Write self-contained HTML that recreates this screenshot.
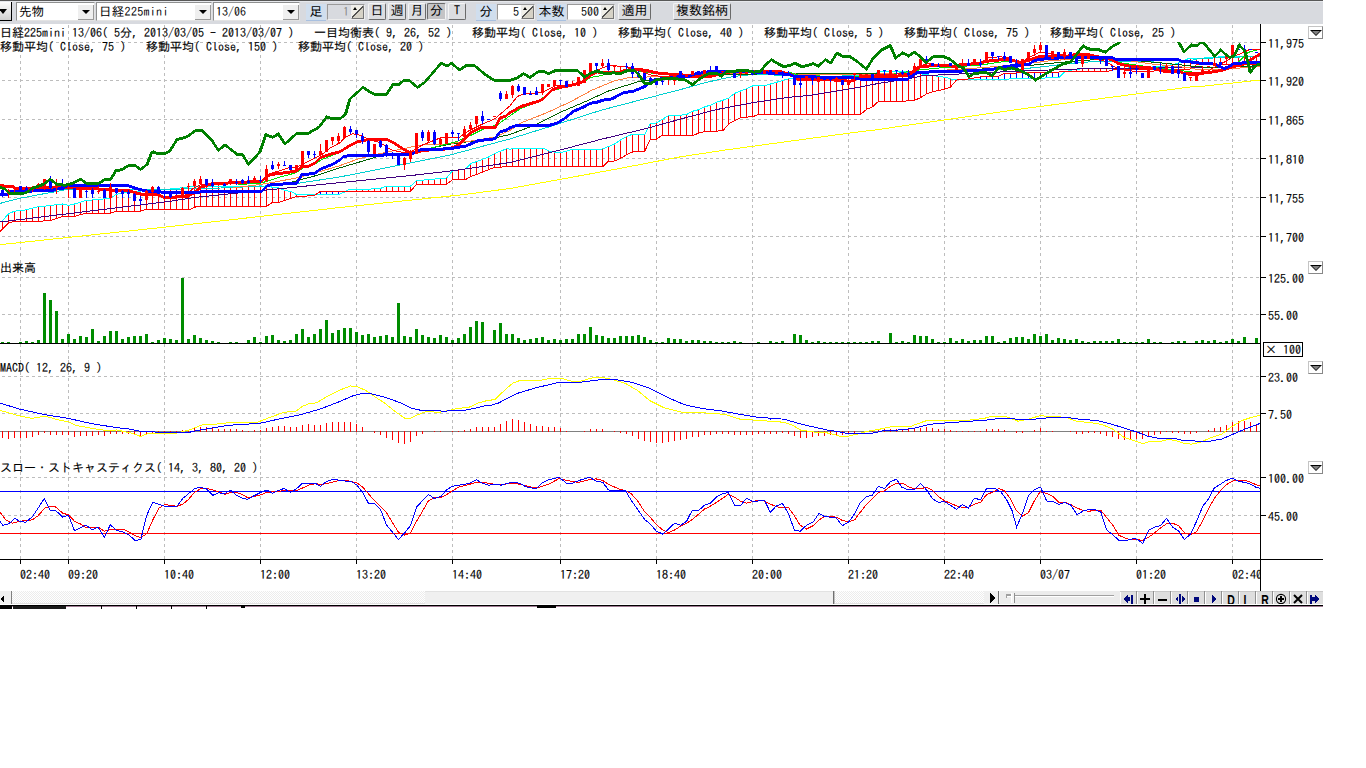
<!DOCTYPE html>
<html lang="ja">
<head>
<meta charset="utf-8">
<title>日経225mini 13/06 チャート</title>
<style>
html,body{margin:0;padding:0;background:#fff;}
body{width:1366px;height:768px;overflow:hidden;position:relative;
  font-family:"IPAGothic","Liberation Mono","Noto Sans CJK JP",monospace;font-size:12px;line-height:12px;color:#000;}
#tb{position:absolute;left:0;top:0;width:1323px;height:24px;background:#d8dadf;border-top:1px solid #585858;box-sizing:border-box;overflow:hidden;}
#tb:before{content:"";position:absolute;left:0;top:0;width:100%;height:1px;background:#e6e8ec;}
.cb{position:absolute;top:1px;height:19px;background:#fff;border:1px solid #8e8f8f;border-right-color:#e3e3e3;border-bottom-color:#e3e3e3;box-sizing:border-box;white-space:nowrap;}
.cb span{position:absolute;left:2px;top:2px;font-size:12px;line-height:12px;}
.cb span u{text-decoration:none;font-size:12.5px;}
.cb i{position:absolute;right:0px;top:2px;width:16px;height:15px;background:#efefef;border-right:1px solid #9a9a9a;border-bottom:1px solid #9a9a9a;box-sizing:border-box;}
.cb i:after{content:"";position:absolute;left:4px;top:5px;border:4px solid transparent;border-top:4px solid #000;border-bottom:0;}
.lb{position:absolute;top:3px;height:17px;background:#d0deee;border-bottom:1px solid #a8c0e0;box-sizing:border-box;text-align:center;font-size:13px;line-height:15px;}
.sp{position:absolute;top:3px;height:16px;background:#fff;border:1px solid #9a9a9a;border-right-color:#eee;border-bottom-color:#eee;box-sizing:border-box;text-align:right;font-size:12px;line-height:12px;}
.sp b{font-weight:normal;position:absolute;right:15px;top:0;}
.sp i{position:absolute;right:0;top:0;width:13px;height:14px;background:linear-gradient(135deg,#f0efe8 47%,#333 48%,#333 52%,#d6d2c6 53%);border:1px solid #777;border-top-color:#eee;border-left-color:#eee;box-sizing:border-box;}
.sp i:after{content:"";position:absolute;left:1px;top:1px;border-left:2px solid transparent;border-right:2px solid transparent;border-bottom:3px solid #000;}
.bt{position:absolute;top:2px;height:17px;background:#dcdde0;border:1px solid #f4f4f4;border-right-color:#6a6a6a;border-bottom-color:#6a6a6a;box-sizing:border-box;text-align:center;font-size:13px;line-height:14px;border-radius:2px;}
.bt.on{background:#c4c4c6;border-color:#6a6a6a #f4f4f4 #f4f4f4 #6a6a6a;}
.h{position:absolute;white-space:pre;height:12px;-webkit-text-stroke:0.12px #000;}
.dd{position:absolute;left:1308px;width:15px;height:13px;border:1px solid #888;border-top-color:#c4c4c4;border-left-color:#c4c4c4;box-sizing:border-box;background:#fff;}
.dd:before{content:"";position:absolute;left:1px;top:3px;border-left:6px solid transparent;border-right:6px solid transparent;border-top:6px solid #000;}
.dd:after{content:"";position:absolute;left:3px;top:4px;border-left:4px solid transparent;border-right:4px solid transparent;border-top:4px solid #808080;}
svg{position:absolute;left:0;top:0;}
svg .t text{font-family:"IPAGothic","Liberation Mono","Noto Sans CJK JP",monospace;font-size:12px;fill:#000;stroke:#000;stroke-width:0.12px;}
</style>
</head>
<body>
<svg width="1366" height="768" viewBox="0 0 1366 768" shape-rendering="crispEdges">
<g stroke="#bdbdbd" stroke-width="1" stroke-dasharray="3 3" fill="none"><line x1="20.5" y1="25" x2="20.5" y2="259"/><line x1="20.5" y1="260" x2="20.5" y2="359"/><line x1="20.5" y1="360" x2="20.5" y2="459"/><line x1="20.5" y1="460" x2="20.5" y2="559"/><line x1="68.5" y1="25" x2="68.5" y2="259"/><line x1="68.5" y1="260" x2="68.5" y2="359"/><line x1="68.5" y1="360" x2="68.5" y2="459"/><line x1="68.5" y1="460" x2="68.5" y2="559"/><line x1="164.5" y1="25" x2="164.5" y2="259"/><line x1="164.5" y1="260" x2="164.5" y2="359"/><line x1="164.5" y1="360" x2="164.5" y2="459"/><line x1="164.5" y1="460" x2="164.5" y2="559"/><line x1="260.5" y1="25" x2="260.5" y2="259"/><line x1="260.5" y1="260" x2="260.5" y2="359"/><line x1="260.5" y1="360" x2="260.5" y2="459"/><line x1="260.5" y1="460" x2="260.5" y2="559"/><line x1="356.5" y1="25" x2="356.5" y2="259"/><line x1="356.5" y1="260" x2="356.5" y2="359"/><line x1="356.5" y1="360" x2="356.5" y2="459"/><line x1="356.5" y1="460" x2="356.5" y2="559"/><line x1="452.5" y1="25" x2="452.5" y2="259"/><line x1="452.5" y1="260" x2="452.5" y2="359"/><line x1="452.5" y1="360" x2="452.5" y2="459"/><line x1="452.5" y1="460" x2="452.5" y2="559"/><line x1="560.5" y1="25" x2="560.5" y2="259"/><line x1="560.5" y1="260" x2="560.5" y2="359"/><line x1="560.5" y1="360" x2="560.5" y2="459"/><line x1="560.5" y1="460" x2="560.5" y2="559"/><line x1="656.5" y1="25" x2="656.5" y2="259"/><line x1="656.5" y1="260" x2="656.5" y2="359"/><line x1="656.5" y1="360" x2="656.5" y2="459"/><line x1="656.5" y1="460" x2="656.5" y2="559"/><line x1="752.5" y1="25" x2="752.5" y2="259"/><line x1="752.5" y1="260" x2="752.5" y2="359"/><line x1="752.5" y1="360" x2="752.5" y2="459"/><line x1="752.5" y1="460" x2="752.5" y2="559"/><line x1="848.5" y1="25" x2="848.5" y2="259"/><line x1="848.5" y1="260" x2="848.5" y2="359"/><line x1="848.5" y1="360" x2="848.5" y2="459"/><line x1="848.5" y1="460" x2="848.5" y2="559"/><line x1="944.5" y1="25" x2="944.5" y2="259"/><line x1="944.5" y1="260" x2="944.5" y2="359"/><line x1="944.5" y1="360" x2="944.5" y2="459"/><line x1="944.5" y1="460" x2="944.5" y2="559"/><line x1="1040.5" y1="25" x2="1040.5" y2="259"/><line x1="1040.5" y1="260" x2="1040.5" y2="359"/><line x1="1040.5" y1="360" x2="1040.5" y2="459"/><line x1="1040.5" y1="460" x2="1040.5" y2="559"/><line x1="1136.5" y1="25" x2="1136.5" y2="259"/><line x1="1136.5" y1="260" x2="1136.5" y2="359"/><line x1="1136.5" y1="360" x2="1136.5" y2="459"/><line x1="1136.5" y1="460" x2="1136.5" y2="559"/><line x1="1232.5" y1="25" x2="1232.5" y2="259"/><line x1="1232.5" y1="260" x2="1232.5" y2="359"/><line x1="1232.5" y1="360" x2="1232.5" y2="459"/><line x1="1232.5" y1="460" x2="1232.5" y2="559"/></g>
<g stroke="#bdbdbd" stroke-width="1" stroke-dasharray="3 3" stroke-dashoffset="4" fill="none"><line x1="0" y1="42.5" x2="1260" y2="42.5"/><line x1="0" y1="80.5" x2="1260" y2="80.5"/><line x1="0" y1="119.5" x2="1260" y2="119.5"/><line x1="0" y1="158.5" x2="1260" y2="158.5"/><line x1="0" y1="197.5" x2="1260" y2="197.5"/><line x1="0" y1="236.5" x2="1260" y2="236.5"/><line x1="0" y1="277.5" x2="1260" y2="277.5"/><line x1="0" y1="314.5" x2="1260" y2="314.5"/><line x1="0" y1="376.5" x2="1260" y2="376.5"/><line x1="0" y1="413.5" x2="1260" y2="413.5"/><line x1="0" y1="477.5" x2="1260" y2="477.5"/><line x1="0" y1="515.5" x2="1260" y2="515.5"/></g>
<defs><clipPath id="cg"><rect x="0" y="42" width="1260" height="220"/></clipPath></defs>
<g stroke-width="1"><line x1="2.5" y1="221.0" x2="2.5" y2="229.7" stroke="#ff0000"/><line x1="8.5" y1="214.3" x2="8.5" y2="223.4" stroke="#ff0000"/><line x1="14.5" y1="211.3" x2="14.5" y2="221.4" stroke="#ff0000"/><line x1="20.5" y1="210.6" x2="20.5" y2="221.4" stroke="#ff0000"/><line x1="26.5" y1="209.9" x2="26.5" y2="221.4" stroke="#ff0000"/><line x1="32.5" y1="208.4" x2="32.5" y2="221.4" stroke="#ff0000"/><line x1="38.5" y1="206.8" x2="38.5" y2="221.4" stroke="#ff0000"/><line x1="44.5" y1="206.3" x2="44.5" y2="220.9" stroke="#ff0000"/><line x1="50.5" y1="205.6" x2="50.5" y2="220.4" stroke="#ff0000"/><line x1="56.5" y1="204.9" x2="56.5" y2="218.6" stroke="#ff0000"/><line x1="62.5" y1="204.1" x2="62.5" y2="216.6" stroke="#ff0000"/><line x1="68.5" y1="205.2" x2="68.5" y2="216.4" stroke="#ff0000"/><line x1="74.5" y1="204.2" x2="74.5" y2="216.4" stroke="#ff0000"/><line x1="80.5" y1="202.3" x2="80.5" y2="214.6" stroke="#ff0000"/><line x1="86.5" y1="200.3" x2="86.5" y2="213.3" stroke="#ff0000"/><line x1="92.5" y1="200.0" x2="92.5" y2="213.2" stroke="#ff0000"/><line x1="98.5" y1="199.9" x2="98.5" y2="213.2" stroke="#ff0000"/><line x1="104.5" y1="198.9" x2="104.5" y2="213.2" stroke="#ff0000"/><line x1="110.5" y1="198.0" x2="110.5" y2="213.2" stroke="#ff0000"/><line x1="116.5" y1="194.6" x2="116.5" y2="211.4" stroke="#ff0000"/><line x1="122.5" y1="193.1" x2="122.5" y2="211.2" stroke="#ff0000"/><line x1="128.5" y1="192.4" x2="128.5" y2="211.2" stroke="#ff0000"/><line x1="134.5" y1="191.7" x2="134.5" y2="211.2" stroke="#ff0000"/><line x1="140.5" y1="191.1" x2="140.5" y2="211.2" stroke="#ff0000"/><line x1="146.5" y1="190.4" x2="146.5" y2="209.4" stroke="#ff0000"/><line x1="152.5" y1="190.1" x2="152.5" y2="209.2" stroke="#ff0000"/><line x1="158.5" y1="189.7" x2="158.5" y2="209.2" stroke="#ff0000"/><line x1="164.5" y1="189.4" x2="164.5" y2="209.2" stroke="#ff0000"/><line x1="170.5" y1="189.0" x2="170.5" y2="209.2" stroke="#ff0000"/><line x1="176.5" y1="188.4" x2="176.5" y2="209.2" stroke="#ff0000"/><line x1="182.5" y1="187.8" x2="182.5" y2="209.2" stroke="#ff0000"/><line x1="188.5" y1="187.1" x2="188.5" y2="209.2" stroke="#ff0000"/><line x1="194.5" y1="186.5" x2="194.5" y2="207.6" stroke="#ff0000"/><line x1="200.5" y1="186.3" x2="200.5" y2="206.3" stroke="#ff0000"/><line x1="206.5" y1="186.3" x2="206.5" y2="206.3" stroke="#ff0000"/><line x1="212.5" y1="186.3" x2="212.5" y2="206.3" stroke="#ff0000"/><line x1="218.5" y1="186.2" x2="218.5" y2="206.3" stroke="#ff0000"/><line x1="224.5" y1="186.2" x2="224.5" y2="206.3" stroke="#ff0000"/><line x1="230.5" y1="186.2" x2="230.5" y2="206.3" stroke="#ff0000"/><line x1="236.5" y1="186.1" x2="236.5" y2="206.3" stroke="#ff0000"/><line x1="242.5" y1="186.1" x2="242.5" y2="206.3" stroke="#ff0000"/><line x1="248.5" y1="186.1" x2="248.5" y2="206.3" stroke="#ff0000"/><line x1="254.5" y1="186.1" x2="254.5" y2="206.3" stroke="#ff0000"/><line x1="260.5" y1="186.0" x2="260.5" y2="206.3" stroke="#ff0000"/><line x1="266.5" y1="186.5" x2="266.5" y2="206.3" stroke="#ff0000"/><line x1="272.5" y1="187.1" x2="272.5" y2="202.7" stroke="#ff0000"/><line x1="278.5" y1="187.7" x2="278.5" y2="202.4" stroke="#ff0000"/><line x1="284.5" y1="190.1" x2="284.5" y2="200.6" stroke="#ff0000"/><line x1="290.5" y1="191.3" x2="290.5" y2="198.7" stroke="#ff0000"/><line x1="296.5" y1="194.3" x2="296.5" y2="196.8" stroke="#ff0000"/><line x1="320.5" y1="194.4" x2="320.5" y2="191.9" stroke="#0000ff"/><line x1="326.5" y1="194.3" x2="326.5" y2="191.9" stroke="#0000ff"/><line x1="332.5" y1="194.2" x2="332.5" y2="191.9" stroke="#0000ff"/><line x1="338.5" y1="194.2" x2="338.5" y2="191.9" stroke="#0000ff"/><line x1="356.5" y1="189.2" x2="356.5" y2="191.4" stroke="#ff0000"/><line x1="362.5" y1="189.2" x2="362.5" y2="191.4" stroke="#ff0000"/><line x1="368.5" y1="189.2" x2="368.5" y2="191.4" stroke="#ff0000"/><line x1="374.5" y1="188.3" x2="374.5" y2="191.4" stroke="#ff0000"/><line x1="380.5" y1="188.3" x2="380.5" y2="191.4" stroke="#ff0000"/><line x1="386.5" y1="186.7" x2="386.5" y2="191.4" stroke="#ff0000"/><line x1="392.5" y1="186.2" x2="392.5" y2="191.4" stroke="#ff0000"/><line x1="398.5" y1="186.2" x2="398.5" y2="191.4" stroke="#ff0000"/><line x1="404.5" y1="186.2" x2="404.5" y2="191.4" stroke="#ff0000"/><line x1="410.5" y1="186.2" x2="410.5" y2="191.4" stroke="#ff0000"/><line x1="416.5" y1="181.2" x2="416.5" y2="185.0" stroke="#ff0000"/><line x1="422.5" y1="180.2" x2="422.5" y2="184.4" stroke="#ff0000"/><line x1="428.5" y1="179.7" x2="428.5" y2="184.4" stroke="#ff0000"/><line x1="434.5" y1="179.1" x2="434.5" y2="184.4" stroke="#ff0000"/><line x1="440.5" y1="178.6" x2="440.5" y2="184.4" stroke="#ff0000"/><line x1="446.5" y1="178.0" x2="446.5" y2="184.4" stroke="#ff0000"/><line x1="452.5" y1="171.4" x2="452.5" y2="180.0" stroke="#ff0000"/><line x1="458.5" y1="170.0" x2="458.5" y2="179.5" stroke="#ff0000"/><line x1="464.5" y1="169.1" x2="464.5" y2="179.5" stroke="#ff0000"/><line x1="470.5" y1="164.6" x2="470.5" y2="176.9" stroke="#ff0000"/><line x1="476.5" y1="161.8" x2="476.5" y2="174.6" stroke="#ff0000"/><line x1="482.5" y1="159.5" x2="482.5" y2="172.3" stroke="#ff0000"/><line x1="488.5" y1="157.2" x2="488.5" y2="170.0" stroke="#ff0000"/><line x1="494.5" y1="153.9" x2="494.5" y2="167.4" stroke="#ff0000"/><line x1="500.5" y1="151.3" x2="500.5" y2="167.0" stroke="#ff0000"/><line x1="506.5" y1="149.1" x2="506.5" y2="166.9" stroke="#ff0000"/><line x1="512.5" y1="148.9" x2="512.5" y2="166.9" stroke="#ff0000"/><line x1="518.5" y1="148.4" x2="518.5" y2="166.8" stroke="#ff0000"/><line x1="524.5" y1="148.4" x2="524.5" y2="166.8" stroke="#ff0000"/><line x1="530.5" y1="148.4" x2="530.5" y2="166.8" stroke="#ff0000"/><line x1="536.5" y1="148.4" x2="536.5" y2="166.8" stroke="#ff0000"/><line x1="542.5" y1="148.4" x2="542.5" y2="166.8" stroke="#ff0000"/><line x1="548.5" y1="150.6" x2="548.5" y2="166.8" stroke="#ff0000"/><line x1="554.5" y1="152.0" x2="554.5" y2="166.8" stroke="#ff0000"/><line x1="560.5" y1="153.0" x2="560.5" y2="166.8" stroke="#ff0000"/><line x1="566.5" y1="151.2" x2="566.5" y2="166.7" stroke="#ff0000"/><line x1="572.5" y1="149.4" x2="572.5" y2="166.7" stroke="#ff0000"/><line x1="578.5" y1="149.4" x2="578.5" y2="166.7" stroke="#ff0000"/><line x1="584.5" y1="149.4" x2="584.5" y2="166.7" stroke="#ff0000"/><line x1="590.5" y1="149.4" x2="590.5" y2="166.7" stroke="#ff0000"/><line x1="596.5" y1="149.4" x2="596.5" y2="166.7" stroke="#ff0000"/><line x1="602.5" y1="149.0" x2="602.5" y2="166.7" stroke="#ff0000"/><line x1="608.5" y1="146.8" x2="608.5" y2="161.6" stroke="#ff0000"/><line x1="614.5" y1="144.3" x2="614.5" y2="161.1" stroke="#ff0000"/><line x1="620.5" y1="140.4" x2="620.5" y2="158.6" stroke="#ff0000"/><line x1="626.5" y1="136.9" x2="626.5" y2="155.2" stroke="#ff0000"/><line x1="632.5" y1="134.4" x2="632.5" y2="152.1" stroke="#ff0000"/><line x1="638.5" y1="134.4" x2="638.5" y2="151.7" stroke="#ff0000"/><line x1="644.5" y1="134.4" x2="644.5" y2="151.2" stroke="#ff0000"/><line x1="650.5" y1="124.4" x2="650.5" y2="139.6" stroke="#ff0000"/><line x1="656.5" y1="123.0" x2="656.5" y2="139.0" stroke="#ff0000"/><line x1="662.5" y1="119.4" x2="662.5" y2="135.4" stroke="#ff0000"/><line x1="668.5" y1="115.9" x2="668.5" y2="135.3" stroke="#ff0000"/><line x1="674.5" y1="115.4" x2="674.5" y2="135.4" stroke="#ff0000"/><line x1="680.5" y1="115.2" x2="680.5" y2="135.4" stroke="#ff0000"/><line x1="686.5" y1="114.5" x2="686.5" y2="135.4" stroke="#ff0000"/><line x1="692.5" y1="111.7" x2="692.5" y2="135.5" stroke="#ff0000"/><line x1="698.5" y1="109.9" x2="698.5" y2="133.4" stroke="#ff0000"/><line x1="704.5" y1="107.2" x2="704.5" y2="131.7" stroke="#ff0000"/><line x1="710.5" y1="105.2" x2="710.5" y2="131.3" stroke="#ff0000"/><line x1="716.5" y1="102.5" x2="716.5" y2="131.1" stroke="#ff0000"/><line x1="722.5" y1="100.6" x2="722.5" y2="130.8" stroke="#ff0000"/><line x1="728.5" y1="98.3" x2="728.5" y2="124.6" stroke="#ff0000"/><line x1="734.5" y1="93.8" x2="734.5" y2="121.0" stroke="#ff0000"/><line x1="740.5" y1="91.2" x2="740.5" y2="117.9" stroke="#ff0000"/><line x1="746.5" y1="88.9" x2="746.5" y2="117.2" stroke="#ff0000"/><line x1="752.5" y1="86.3" x2="752.5" y2="116.8" stroke="#ff0000"/><line x1="758.5" y1="85.9" x2="758.5" y2="114.7" stroke="#ff0000"/><line x1="764.5" y1="85.9" x2="764.5" y2="114.4" stroke="#ff0000"/><line x1="770.5" y1="84.2" x2="770.5" y2="114.4" stroke="#ff0000"/><line x1="776.5" y1="82.5" x2="776.5" y2="114.4" stroke="#ff0000"/><line x1="782.5" y1="80.6" x2="782.5" y2="114.4" stroke="#ff0000"/><line x1="788.5" y1="78.9" x2="788.5" y2="114.4" stroke="#ff0000"/><line x1="794.5" y1="78.5" x2="794.5" y2="114.4" stroke="#ff0000"/><line x1="800.5" y1="77.6" x2="800.5" y2="114.4" stroke="#ff0000"/><line x1="806.5" y1="76.9" x2="806.5" y2="114.4" stroke="#ff0000"/><line x1="812.5" y1="76.7" x2="812.5" y2="114.4" stroke="#ff0000"/><line x1="818.5" y1="76.6" x2="818.5" y2="114.5" stroke="#ff0000"/><line x1="824.5" y1="76.4" x2="824.5" y2="114.5" stroke="#ff0000"/><line x1="830.5" y1="76.3" x2="830.5" y2="114.5" stroke="#ff0000"/><line x1="836.5" y1="76.2" x2="836.5" y2="114.5" stroke="#ff0000"/><line x1="842.5" y1="76.0" x2="842.5" y2="114.5" stroke="#ff0000"/><line x1="848.5" y1="75.9" x2="848.5" y2="114.5" stroke="#ff0000"/><line x1="854.5" y1="75.7" x2="854.5" y2="114.5" stroke="#ff0000"/><line x1="860.5" y1="75.4" x2="860.5" y2="114.6" stroke="#ff0000"/><line x1="866.5" y1="75.2" x2="866.5" y2="109.9" stroke="#ff0000"/><line x1="872.5" y1="74.9" x2="872.5" y2="107.0" stroke="#ff0000"/><line x1="878.5" y1="72.2" x2="878.5" y2="101.8" stroke="#ff0000"/><line x1="884.5" y1="71.9" x2="884.5" y2="101.3" stroke="#ff0000"/><line x1="890.5" y1="71.9" x2="890.5" y2="101.3" stroke="#ff0000"/><line x1="896.5" y1="71.9" x2="896.5" y2="101.3" stroke="#ff0000"/><line x1="902.5" y1="71.9" x2="902.5" y2="101.3" stroke="#ff0000"/><line x1="908.5" y1="71.9" x2="908.5" y2="100.9" stroke="#ff0000"/><line x1="914.5" y1="72.8" x2="914.5" y2="100.3" stroke="#ff0000"/><line x1="920.5" y1="73.7" x2="920.5" y2="97.9" stroke="#ff0000"/><line x1="926.5" y1="74.5" x2="926.5" y2="94.1" stroke="#ff0000"/><line x1="932.5" y1="75.4" x2="932.5" y2="92.0" stroke="#ff0000"/><line x1="938.5" y1="76.3" x2="938.5" y2="90.6" stroke="#ff0000"/><line x1="944.5" y1="77.2" x2="944.5" y2="89.3" stroke="#ff0000"/><line x1="950.5" y1="78.7" x2="950.5" y2="87.2" stroke="#ff0000"/><line x1="980.5" y1="79.2" x2="980.5" y2="76.9" stroke="#0000ff"/><line x1="986.5" y1="79.2" x2="986.5" y2="76.9" stroke="#0000ff"/><line x1="992.5" y1="79.2" x2="992.5" y2="76.9" stroke="#0000ff"/><line x1="998.5" y1="79.1" x2="998.5" y2="76.4" stroke="#0000ff"/><line x1="1004.5" y1="79.1" x2="1004.5" y2="73.6" stroke="#0000ff"/><line x1="1010.5" y1="79.0" x2="1010.5" y2="73.3" stroke="#0000ff"/><line x1="1016.5" y1="79.0" x2="1016.5" y2="73.0" stroke="#0000ff"/><line x1="1022.5" y1="78.9" x2="1022.5" y2="72.7" stroke="#0000ff"/><line x1="1028.5" y1="78.7" x2="1028.5" y2="72.6" stroke="#0000ff"/><line x1="1034.5" y1="78.4" x2="1034.5" y2="72.5" stroke="#0000ff"/><line x1="1040.5" y1="78.2" x2="1040.5" y2="72.4" stroke="#0000ff"/><line x1="1046.5" y1="78.0" x2="1046.5" y2="72.3" stroke="#0000ff"/><line x1="1052.5" y1="77.8" x2="1052.5" y2="72.2" stroke="#0000ff"/><line x1="1058.5" y1="77.6" x2="1058.5" y2="72.0" stroke="#0000ff"/><line x1="1076.5" y1="69.0" x2="1076.5" y2="71.4" stroke="#ff0000"/><line x1="1082.5" y1="68.9" x2="1082.5" y2="71.4" stroke="#ff0000"/><line x1="1088.5" y1="68.8" x2="1088.5" y2="71.4" stroke="#ff0000"/><line x1="1094.5" y1="68.7" x2="1094.5" y2="71.4" stroke="#ff0000"/><line x1="1100.5" y1="68.6" x2="1100.5" y2="71.4" stroke="#ff0000"/><line x1="1106.5" y1="68.5" x2="1106.5" y2="71.4" stroke="#ff0000"/><line x1="1160.5" y1="66.6" x2="1160.5" y2="69.1" stroke="#ff0000"/><line x1="1166.5" y1="65.9" x2="1166.5" y2="69.1" stroke="#ff0000"/><line x1="1172.5" y1="64.7" x2="1172.5" y2="69.1" stroke="#ff0000"/><line x1="1178.5" y1="63.1" x2="1178.5" y2="69.1" stroke="#ff0000"/><line x1="1184.5" y1="60.5" x2="1184.5" y2="69.1" stroke="#ff0000"/><line x1="1190.5" y1="58.0" x2="1190.5" y2="69.1" stroke="#ff0000"/><line x1="1196.5" y1="58.6" x2="1196.5" y2="65.2" stroke="#ff0000"/><line x1="1202.5" y1="58.2" x2="1202.5" y2="64.4" stroke="#ff0000"/><line x1="1208.5" y1="57.6" x2="1208.5" y2="64.3" stroke="#ff0000"/><line x1="1214.5" y1="57.2" x2="1214.5" y2="64.3" stroke="#ff0000"/><line x1="1220.5" y1="57.0" x2="1220.5" y2="64.3" stroke="#ff0000"/><line x1="1226.5" y1="56.7" x2="1226.5" y2="64.3" stroke="#ff0000"/><line x1="1232.5" y1="56.5" x2="1232.5" y2="64.3" stroke="#ff0000"/><line x1="1238.5" y1="56.4" x2="1238.5" y2="64.2" stroke="#ff0000"/><line x1="1244.5" y1="56.4" x2="1244.5" y2="64.2" stroke="#ff0000"/><line x1="1250.5" y1="56.4" x2="1250.5" y2="64.2" stroke="#ff0000"/><line x1="1256.5" y1="56.4" x2="1256.5" y2="64.2" stroke="#ff0000"/></g>
<polyline fill="none" stroke="#00ffff" stroke-width="1" points="0,221.6 2.2,221 8.5,213.8 14.3,211.2 26,209.9 38.7,206.6 44.7,206.2 62.6,204 68.6,205.3 74.6,204 86.6,200.1 98.6,199.9 104.6,198.8 110.5,197.9 116.5,194.3 122.5,193 134.5,191.7 146.6,190.4 170,189 195.4,186.4 261.4,186 278.4,187.7 285.1,190.6 290.7,191.4 297,194.8 313.9,194.8 320.7,194.3 340,194.1 341,193.3 344.7,192.2 347.6,190.3 350.4,189.2 370.4,189.2 374.2,188.3 380.9,188.3 383.7,187.1 389.4,186.2 410.4,186.2 416.5,180.7 446.6,178 452.6,170.7 465.7,168.9 471.2,163.4 476.7,161.6 488.5,157 494.9,153.4 500.3,151.2 506.7,148.8 510,149.1 517.3,148.4 543.7,148.4 549.2,151.2 554.6,152.1 560.1,153 572,149.4 601.1,149.4 608.4,146.6 613.9,144.4 620.2,140.2 626.6,136.6 632.1,134.4 644.8,134.4 650.3,123.8 656.7,122.9 662.2,119.3 668.5,115.6 680,115.2 686.7,114.4 692.8,111.2 698.8,109.7 704.7,106.9 710.8,105 716.7,102.2 722.8,100.3 728.8,98 734.7,93.3 740.8,90.9 746.7,88.6 752.8,85.9 764.7,85.9 770.8,83.9 776.7,82.3 782.8,80.3 788.8,78.8 794.7,78.4 805,76.9 850,75.8 872.1,74.9 878.6,71.9 908.6,71.9 915.1,73 946.3,77.5 951.5,79.2 967.2,79.2 991.9,79.2 1020,78.9 1034.3,78.4 1059.1,77.5 1064.3,72.3 1074.7,69.1 1111.1,68.4 1137.2,67.8 1163.2,66.4 1176.2,63.8 1190,58 1197.3,58.7 1211,57.3 1233.8,56.4 1259.8,56.4"/>
<polyline fill="none" stroke="#ff0000" stroke-width="1" points="0,231.8 2.2,229.4 8.5,222.9 14.3,221.4 38.7,221.4 50.7,220.3 56.6,218.4 62.6,216.4 74.6,216.4 80.6,214.5 86.6,213.2 110.5,213.2 116.5,211.2 140.6,211.2 146.6,209.2 170,209.2 190.3,209.2 197.1,206.3 266.5,206.3 272.4,202.4 278.4,202.4 297,196.5 313.9,195.7 319.8,191.9 340,191.9 341,191.4 410.4,191.4 416.5,184.4 446.6,184.4 452.6,179.5 465.7,179.5 471.2,176.2 476.7,174.4 488.5,169.8 494.9,167.1 510,166.9 602.9,166.7 608.4,161.2 613.9,161.2 620.2,158.5 626.6,154.8 632.1,152.1 644.8,151.2 650.3,139 656.7,139 662.2,135.3 680,135.4 692.8,135.5 698.8,133.1 704.7,131.6 722.8,130.8 728.8,123.8 734.7,120.6 740.8,117.5 752.8,116.7 758.8,114.4 850,114.5 860.5,114.6 866.5,109.4 872.5,106.8 878.5,101.3 902.6,101.3 914.6,100.3 920.6,97.7 926.5,93.8 932.5,91.8 938.5,90.5 944.5,89.2 950.5,87 956.5,80.1 962.6,79.5 969.8,78.8 980.2,76.9 997.1,76.9 1003.6,73.6 1020,72.8 1064.3,71.9 1076,71.4 1108.5,71.4 1113.7,69.1 1150.2,69.1 1190,69.1 1197.3,64.4 1259.8,64.2"/>
<polyline fill="none" stroke="#ffff00" stroke-width="1" points="0,244.7 170,226.6 340,207.5 461.2,194.9 510,188.5 612,169.9 680,156.9 725.3,150 850,133 874.7,130 1020,109.1 1190,87 1197.3,86.8 1259.8,80.1"/>
<polyline fill="none" stroke="#400080" stroke-width="1" points="0,222 170,201.3 195.4,197.4 261.4,190.6 340,182.6 412.9,175.3 453,170.7 510,162.5 555.6,151.2 601.1,139.3 646.7,128.4 680,119.2 715.9,109.7 752.7,102.7 789.4,97.2 808.1,95.6 850,88.9 878.6,83.4 908.6,78.8 922.9,75.6 941.1,74.9 980.2,73 1020,71 1074.7,69.1 1091.6,68.5 1137.2,68.5 1190,67.1 1197.3,67.8 1259.8,66"/>
<polyline fill="none" stroke="#00d0d0" stroke-width="1" points="0,203.4 20.4,198.2 44.7,193.6 62.6,190.4 68.6,189.1 91.1,189.1 130.2,189.1 170,189.4 220.8,188 264.8,186 288.5,184.7 340,176.9 403.8,164.3 449.3,155.2 510,138.9 555.6,124.8 601.1,110.2 646.7,98.3 680,89.7 703.4,83.1 726.9,77.7 742.5,75.3 758.1,74.5 783.1,75.3 798.8,74.5 850,75.1 915.1,72.3 1020,69.1 1046,66.4 1072.1,63.2 1098.1,61.2 1137.2,61.2 1190,60.6 1197.3,59 1224.7,57.3 1259.8,56.6"/>
<polyline fill="none" stroke="#006000" stroke-width="1" points="264.8,186.4 288.5,183 313.9,176.2 340,167.8 376.4,157 412.9,151.6 449.3,144.3 494.9,137.9 510,134.5 535.5,124.8 561,112 586.5,101.1 608.4,91 637.6,81.9 655.8,79.2 680,77.3 711.2,75.3 742.5,74.1 789.4,73.8 850,73.6 915.1,73 980.2,69.1 1020,66.4 1059.1,62.5 1098.1,59.3 1137.2,60.6 1190,65.8 1197.3,66.9 1224.7,67.4 1259.8,65.6"/>
<polyline fill="none" stroke="#ff8040" stroke-width="1" points="232.6,188 264.8,183.8 297,177.9 315.6,172.8 340,165.6 358.2,158.9 376.4,154.3 407.4,147.9 418.4,145.2 442,144.3 467.6,141.6 494.9,137 510,130.4 520.9,122.9 546.4,112.9 570.1,102 592,90.1 613.9,81 628.4,77.7 639.4,77.7 652.1,76.5 680,75.8 695.6,76.1 726.9,73.8 758.1,72.5 789.4,73 798.8,74.5 850,74.9 889.1,73.6 915.1,73 941.1,70.4 980.2,67.8 1020,64.5 1046,61.2 1085.1,58 1124.1,59.9 1150.2,63.8 1190,67.8 1197.3,69.7 1224.7,69.2 1242.9,67.8 1259.8,66.5"/>
<polyline fill="none" stroke="#00e000" stroke-width="1" points="237.7,184.7 261.4,183 280.1,177 296.1,172.8 303.8,167.7 315.6,163.5 322.4,159.3 340,152.4 349.1,146.1 356.4,142.1 367.3,139.7 387.4,139.7 394.7,143.4 402.9,148.8 411.1,153.4 416.5,151.6 438.4,146.1 456.6,141.6 471.2,135.2 485.8,127.9 496.7,125.2 510,115.8 520.9,108.4 537.3,102 551.9,91 570.1,85.6 582.9,82.8 590.2,77.4 601.1,75.6 612,72.8 637.6,71 655.8,73.7 680,74.6 711.2,73.8 742.5,71.9 789.4,72.2 798.8,75.3 850,77 889.1,74.9 915.1,70.4 941.1,67.8 980.2,65.1 1006.2,61.2 1020,62.5 1039.5,58 1072.1,56 1098.1,57.3 1118.9,62.5 1150.2,67.1 1190,71.7 1197.3,72.8 1215.6,71 1233.8,66.5 1248.4,52.3 1259.8,49.1"/>
<polyline fill="none" stroke="#ff0000" stroke-width="1" points="170,196.5 186.9,194.8 193.7,188 200.5,184.7 212.3,184.7 237.7,182.1 261.4,180.9 267.4,174.5 278.4,171.1 288.5,167.7 297,166.9 303.8,163.5 313.9,158.4 322.4,154.2 330.9,147.4 340,142.8 345.5,137 352.8,133.7 360,135.2 369.2,139.7 380.1,142.5 391,149.8 402.9,152.5 411.1,151.6 422,145.2 440.2,137.9 458.4,137.9 467.6,131.5 482.1,124.2 494.9,118.8 510,105.8 517.3,96.5 524.6,93.4 541,92.9 548.3,89.2 555.6,85.6 570.1,84.7 582.9,81 590.2,73.7 602.9,67.4 612,65.5 630.3,67.4 641.2,71 652.1,75.6 664.9,76.5 680,75 695.6,75.3 711.2,72.2 726.9,70.9 758.1,71.9 781.6,72.5 792.5,76.9 798.8,80.8 820.6,80 842.5,81.6 850,80.6 863,75.6 889.1,74.3 908.6,73.6 917.7,66.4 928.1,63.8 954.1,65.8 967.2,64.5 980.2,63.2 988,58 999.7,56.7 1010.1,58 1020,64.5 1027.8,58 1039.5,52.1 1052.5,54.1 1072.1,55.4 1089,58 1104.6,61.2 1118.9,69.1 1137.2,71.7 1150.2,71.7 1163.2,69.1 1176.2,71.7 1190,75.6 1197.3,75.6 1206.5,71.9 1215.6,66.5 1226.5,61 1233.8,56.4 1242.9,52.8 1249.3,49.6 1259.8,49.3"/>
<defs><polyline id="p_redMA" fill="none" stroke-width="1" points="0,185.8 13,186.5 15.6,188.4 29.9,188.4 32.6,187.8 44.3,187.1 52.1,187.8 57.3,187.1 67.7,187.8 91.1,188.4 115.9,190.4 130.2,191 140.6,194.3 147.1,194.9 158.9,194.9 164.1,197.5 170,197.4 186.9,196.5 193.7,193.1 200.5,187.2 206.4,185.5 212.3,183.8 261.4,181.3 267.4,176.2 271.6,174.5 285.1,172.8 296.1,171.1 302.1,166.9 308.8,166 315.6,162.6 320.7,157.6 329.2,154.5 340,151.7 349.1,146.1 356.4,142.1 367.3,139.7 387.4,139.7 394.7,143.4 402.9,148.8 411.1,153.4 416.5,151.6 431.1,149.8 449.3,148.8 458.4,145.2 465.7,137.9 471.2,132.4 480.3,127.9 494.9,127.9 500.3,117.9 505.8,116 510,112.7 520.9,106.5 537.3,101.6 542.8,99.2 551.9,90.1 557.4,87.9 570.1,85.6 581.1,82.8 590.2,75.6 597.5,71.9 604.8,72.8 619.3,72.3 626.6,70.1 637.6,69.2 648.5,71 661.2,73.7 680,74.5 695.6,76.9 711.2,76.1 723.8,73 733.1,71.4 758.1,71.9 781.6,71.9 792.5,75.3 798.8,78.8 820.6,79.7 842.5,80 850,81.6 857.8,78.2 876,76.9 889.1,76.9 902.1,75.6 909.9,74.9 915.1,70.4 920.9,66.4 941.1,65.4 956.7,66.4 958,65.1 980.2,63.2 986.7,61.2 1006.2,59.3 1012.7,60.6 1020,62.2 1027.8,60.6 1039.5,56.7 1052.5,56.7 1064.3,56.7 1074.7,54.7 1089,54.7 1096.8,56.7 1111.1,59.3 1118.9,63.8 1130.6,66.4 1150.2,67.8 1163.2,71 1178.8,71 1184,73.6 1190,73.6 1206.5,72.8 1221,70.6 1233.8,66.5 1242.9,64.6 1250.2,60.1 1259.8,54.2"/></defs>
<g stroke="#ff0000"><use href="#p_redMA" x="0" y="0"/><use href="#p_redMA" x="-1" y="0"/><use href="#p_redMA" x="1" y="0"/><use href="#p_redMA" x="0" y="-1"/><use href="#p_redMA" x="0" y="1"/></g>
<defs><polyline id="p_blueMA" fill="none" stroke-width="1" points="0,194.9 7.8,194.9 9.8,191.7 26,191.7 31.9,191 52.1,190.4 56.6,189.1 62.6,187.8 67.7,185.8 128.9,185.8 135.4,188.4 143.2,190.4 152.3,191.7 170,192.3 261.4,191.4 266.5,186.4 271.6,184.2 296.1,183.8 302.1,174.5 313.9,173.7 320.7,169.1 332.5,164.3 340,160 343.6,156.1 409.2,154.3 412.9,153.4 420.2,149.8 449.3,148.8 465.7,146.1 478.5,140.6 494.9,138.8 500.3,131.5 505.8,130.6 510,127.7 515.5,125.7 548.3,125.7 557.4,122.9 564.7,118.4 573.8,111.1 582.9,107.4 590.2,103.4 597.5,102 602.9,100.2 612,98.9 623,92.9 633.9,91 644.8,86.5 650.3,81.9 655.8,79.2 664.9,78.8 680,76.5 689.4,76.1 695.6,73.8 711.2,71.4 750.3,71.9 767.5,73 780,73.8 789.4,74.5 795.6,76.9 850,77.2 863,79.5 907.3,79.5 912.5,75.6 917.7,72.3 941.1,71.7 980.2,70.4 993.2,69.1 1006.2,66.4 1020,65.1 1029.1,64.5 1033,61.2 1039.5,59.3 1059.1,58 1085.1,57.3 1111.1,57.3 1117.6,59.9 1178.8,59.9 1182.7,61.9 1190,61.9 1201.9,63.3 1215.6,64.2 1218.3,66 1224.7,68.7 1229.3,66.5 1233.8,63.3 1259.8,62.4"/></defs>
<g stroke="#0000ff"><use href="#p_blueMA" x="0" y="0"/><use href="#p_blueMA" x="-1" y="0"/><use href="#p_blueMA" x="1" y="0"/><use href="#p_blueMA" x="0" y="-1"/><use href="#p_blueMA" x="0" y="1"/></g>
<g stroke-width="1"><line x1="2.5" y1="189" x2="2.5" y2="197" stroke="#0000ff"/><rect x="1" y="190" width="3" height="5" fill="#0000ff"/><line x1="8.5" y1="189" x2="8.5" y2="198" stroke="#ff0000"/><rect x="7" y="190" width="3" height="4" fill="#ff0000"/><line x1="14.5" y1="186" x2="14.5" y2="194" stroke="#ff0000"/><rect x="13" y="187" width="3" height="2" fill="#ff0000"/><line x1="20.5" y1="186" x2="20.5" y2="193" stroke="#0000ff"/><rect x="19" y="186" width="3" height="4" fill="#0000ff"/><line x1="26.5" y1="186" x2="26.5" y2="194" stroke="#0000ff"/><rect x="25" y="188" width="3" height="2" fill="#0000ff"/><line x1="32.5" y1="187" x2="32.5" y2="192" stroke="#ff0000"/><rect x="31" y="188" width="3" height="2" fill="#ff0000"/><line x1="38.5" y1="183" x2="38.5" y2="189" stroke="#ff0000"/><rect x="37" y="184" width="3" height="1" fill="#ff0000"/><line x1="44.5" y1="179" x2="44.5" y2="190" stroke="#ff0000"/><rect x="43" y="179" width="3" height="10" fill="#ff0000"/><line x1="50.5" y1="176" x2="50.5" y2="190" stroke="#0000ff"/><rect x="49" y="179" width="3" height="9" fill="#0000ff"/><line x1="56.5" y1="179" x2="56.5" y2="194" stroke="#ff0000"/><rect x="55" y="185" width="3" height="3" fill="#ff0000"/><line x1="62.5" y1="179" x2="62.5" y2="190" stroke="#0000ff"/><rect x="61" y="184" width="3" height="6" fill="#0000ff"/><line x1="68.5" y1="186" x2="68.5" y2="198" stroke="#ff0000"/><rect x="67" y="187" width="3" height="1" fill="#ff0000"/><line x1="74.5" y1="188" x2="74.5" y2="198" stroke="#0000ff"/><rect x="73" y="188" width="3" height="10" fill="#0000ff"/><line x1="80.5" y1="190" x2="80.5" y2="198" stroke="#ff0000"/><rect x="79" y="190" width="3" height="8" fill="#ff0000"/><line x1="86.5" y1="190" x2="86.5" y2="198" stroke="#0000ff"/><rect x="85" y="191" width="3" height="1" fill="#0000ff"/><line x1="92.5" y1="188" x2="92.5" y2="198" stroke="#0000ff"/><rect x="91" y="190" width="3" height="4" fill="#0000ff"/><line x1="98.5" y1="186" x2="98.5" y2="194" stroke="#ff0000"/><rect x="97" y="191" width="3" height="1" fill="#ff0000"/><line x1="104.5" y1="189" x2="104.5" y2="198" stroke="#0000ff"/><rect x="103" y="190" width="3" height="8" fill="#0000ff"/><line x1="110.5" y1="183" x2="110.5" y2="198" stroke="#ff0000"/><rect x="109" y="187" width="3" height="11" fill="#ff0000"/><line x1="116.5" y1="188" x2="116.5" y2="194" stroke="#0000ff"/><rect x="115" y="188" width="3" height="5" fill="#0000ff"/><line x1="122.5" y1="190" x2="122.5" y2="198" stroke="#0000ff"/><rect x="121" y="191" width="3" height="3" fill="#0000ff"/><line x1="128.5" y1="190" x2="128.5" y2="198" stroke="#0000ff"/><rect x="127" y="192" width="3" height="2" fill="#0000ff"/><line x1="134.5" y1="193" x2="134.5" y2="201" stroke="#0000ff"/><rect x="133" y="194" width="3" height="7" fill="#0000ff"/><line x1="140.5" y1="196" x2="140.5" y2="205" stroke="#0000ff"/><rect x="139" y="199" width="3" height="2" fill="#0000ff"/><line x1="146.5" y1="190" x2="146.5" y2="201" stroke="#ff0000"/><rect x="145" y="191" width="3" height="9" fill="#ff0000"/><line x1="152.5" y1="186" x2="152.5" y2="193" stroke="#ff0000"/><rect x="151" y="187" width="3" height="5" fill="#ff0000"/><line x1="158.5" y1="186" x2="158.5" y2="194" stroke="#0000ff"/><rect x="157" y="187" width="3" height="7" fill="#0000ff"/><line x1="164.5" y1="190" x2="164.5" y2="198" stroke="#0000ff"/><rect x="163" y="191" width="3" height="3" fill="#0000ff"/><line x1="170.5" y1="191" x2="170.5" y2="198" stroke="#0000ff"/><rect x="169" y="191" width="3" height="6" fill="#0000ff"/><line x1="176.5" y1="190" x2="176.5" y2="195" stroke="#0000ff"/><rect x="175" y="191" width="3" height="3" fill="#0000ff"/><line x1="182.5" y1="187" x2="182.5" y2="197" stroke="#ff0000"/><rect x="181" y="188" width="3" height="7" fill="#ff0000"/><line x1="188.5" y1="183" x2="188.5" y2="190" stroke="#ff0000"/><rect x="187" y="186" width="3" height="1" fill="#ff0000"/><line x1="194.5" y1="179" x2="194.5" y2="187" stroke="#ff0000"/><rect x="193" y="181" width="3" height="5" fill="#ff0000"/><line x1="200.5" y1="176" x2="200.5" y2="185" stroke="#ff0000"/><rect x="199" y="179" width="3" height="5" fill="#ff0000"/><line x1="206.5" y1="179" x2="206.5" y2="186" stroke="#0000ff"/><rect x="205" y="179" width="3" height="6" fill="#0000ff"/><line x1="212.5" y1="179" x2="212.5" y2="187" stroke="#0000ff"/><rect x="211" y="183" width="3" height="3" fill="#0000ff"/><line x1="218.5" y1="183" x2="218.5" y2="186" stroke="#ff0000"/><rect x="217" y="184" width="3" height="1" fill="#ff0000"/><line x1="224.5" y1="183" x2="224.5" y2="186" stroke="#0000ff"/><rect x="223" y="184" width="3" height="2" fill="#0000ff"/><line x1="230.5" y1="179" x2="230.5" y2="185" stroke="#ff0000"/><rect x="229" y="179" width="3" height="5" fill="#ff0000"/><line x1="236.5" y1="179" x2="236.5" y2="185" stroke="#0000ff"/><rect x="235" y="182" width="3" height="1" fill="#0000ff"/><line x1="242.5" y1="179" x2="242.5" y2="184" stroke="#0000ff"/><rect x="241" y="180" width="3" height="3" fill="#0000ff"/><line x1="248.5" y1="176" x2="248.5" y2="184" stroke="#0000ff"/><rect x="247" y="181" width="3" height="2" fill="#0000ff"/><line x1="254.5" y1="176" x2="254.5" y2="183" stroke="#ff0000"/><rect x="253" y="178" width="3" height="4" fill="#ff0000"/><line x1="260.5" y1="176" x2="260.5" y2="183" stroke="#0000ff"/><rect x="259" y="180" width="3" height="1" fill="#0000ff"/><line x1="266.5" y1="165" x2="266.5" y2="182" stroke="#ff0000"/><rect x="265" y="169" width="3" height="12" fill="#ff0000"/><line x1="272.5" y1="161" x2="272.5" y2="170" stroke="#0000ff"/><rect x="271" y="165" width="3" height="4" fill="#0000ff"/><line x1="278.5" y1="162" x2="278.5" y2="169" stroke="#ff0000"/><rect x="277" y="164" width="3" height="2" fill="#ff0000"/><line x1="284.5" y1="161" x2="284.5" y2="166" stroke="#0000ff"/><rect x="283" y="165" width="3" height="1" fill="#0000ff"/><line x1="290.5" y1="165" x2="290.5" y2="170" stroke="#0000ff"/><rect x="289" y="165" width="3" height="5" fill="#0000ff"/><line x1="296.5" y1="165" x2="296.5" y2="172" stroke="#ff0000"/><rect x="295" y="165" width="3" height="6" fill="#ff0000"/><line x1="302.5" y1="151" x2="302.5" y2="168" stroke="#ff0000"/><rect x="301" y="151" width="3" height="16" fill="#ff0000"/><line x1="308.5" y1="151" x2="308.5" y2="158" stroke="#0000ff"/><rect x="307" y="151" width="3" height="4" fill="#0000ff"/><line x1="314.5" y1="151" x2="314.5" y2="158" stroke="#0000ff"/><rect x="313" y="154" width="3" height="1" fill="#0000ff"/><line x1="320.5" y1="144" x2="320.5" y2="156" stroke="#ff0000"/><rect x="319" y="151" width="3" height="4" fill="#ff0000"/><line x1="326.5" y1="140" x2="326.5" y2="152" stroke="#ff0000"/><rect x="325" y="140" width="3" height="12" fill="#ff0000"/><line x1="332.5" y1="137" x2="332.5" y2="145" stroke="#ff0000"/><rect x="331" y="137" width="3" height="4" fill="#ff0000"/><line x1="338.5" y1="133" x2="338.5" y2="143" stroke="#ff0000"/><rect x="337" y="136" width="3" height="5" fill="#ff0000"/><line x1="344.5" y1="126" x2="344.5" y2="139" stroke="#ff0000"/><rect x="343" y="127" width="3" height="11" fill="#ff0000"/><line x1="350.5" y1="126" x2="350.5" y2="134" stroke="#0000ff"/><rect x="349" y="129" width="3" height="3" fill="#0000ff"/><line x1="356.5" y1="130" x2="356.5" y2="138" stroke="#0000ff"/><rect x="355" y="130" width="3" height="4" fill="#0000ff"/><line x1="362.5" y1="133" x2="362.5" y2="144" stroke="#0000ff"/><rect x="361" y="136" width="3" height="5" fill="#0000ff"/><line x1="368.5" y1="140" x2="368.5" y2="155" stroke="#0000ff"/><rect x="367" y="141" width="3" height="11" fill="#0000ff"/><line x1="374.5" y1="144" x2="374.5" y2="154" stroke="#ff0000"/><rect x="373" y="144" width="3" height="10" fill="#ff0000"/><line x1="380.5" y1="140" x2="380.5" y2="148" stroke="#0000ff"/><rect x="379" y="141" width="3" height="6" fill="#0000ff"/><line x1="386.5" y1="144" x2="386.5" y2="157" stroke="#0000ff"/><rect x="385" y="145" width="3" height="11" fill="#0000ff"/><line x1="392.5" y1="152" x2="392.5" y2="159" stroke="#0000ff"/><rect x="391" y="153" width="3" height="2" fill="#0000ff"/><line x1="398.5" y1="153" x2="398.5" y2="165" stroke="#0000ff"/><rect x="397" y="153" width="3" height="12" fill="#0000ff"/><line x1="404.5" y1="157" x2="404.5" y2="170" stroke="#ff0000"/><rect x="403" y="158" width="3" height="7" fill="#ff0000"/><line x1="410.5" y1="150" x2="410.5" y2="162" stroke="#ff0000"/><rect x="409" y="152" width="3" height="7" fill="#ff0000"/><line x1="416.5" y1="133" x2="416.5" y2="154" stroke="#ff0000"/><rect x="415" y="133" width="3" height="21" fill="#ff0000"/><line x1="422.5" y1="130" x2="422.5" y2="141" stroke="#0000ff"/><rect x="421" y="132" width="3" height="6" fill="#0000ff"/><line x1="428.5" y1="130" x2="428.5" y2="142" stroke="#ff0000"/><rect x="427" y="132" width="3" height="9" fill="#ff0000"/><line x1="434.5" y1="130" x2="434.5" y2="145" stroke="#0000ff"/><rect x="433" y="132" width="3" height="12" fill="#0000ff"/><line x1="440.5" y1="137" x2="440.5" y2="145" stroke="#ff0000"/><rect x="439" y="139" width="3" height="5" fill="#ff0000"/><line x1="446.5" y1="133" x2="446.5" y2="144" stroke="#ff0000"/><rect x="445" y="133" width="3" height="11" fill="#ff0000"/><line x1="452.5" y1="130" x2="452.5" y2="137" stroke="#0000ff"/><rect x="451" y="132" width="3" height="2" fill="#0000ff"/><line x1="458.5" y1="133" x2="458.5" y2="141" stroke="#0000ff"/><rect x="457" y="133" width="3" height="1" fill="#0000ff"/><line x1="464.5" y1="126" x2="464.5" y2="138" stroke="#ff0000"/><rect x="463" y="129" width="3" height="8" fill="#ff0000"/><line x1="470.5" y1="122" x2="470.5" y2="132" stroke="#ff0000"/><rect x="469" y="125" width="3" height="4" fill="#ff0000"/><line x1="476.5" y1="116" x2="476.5" y2="126" stroke="#ff0000"/><rect x="475" y="116" width="3" height="8" fill="#ff0000"/><line x1="482.5" y1="111" x2="482.5" y2="124" stroke="#0000ff"/><rect x="481" y="116" width="3" height="5" fill="#0000ff"/><line x1="488.5" y1="119" x2="488.5" y2="120" stroke="#0000ff"/><rect x="487" y="119" width="3" height="1" fill="#0000ff"/><line x1="494.5" y1="116" x2="494.5" y2="117" stroke="#ff0000"/><rect x="493" y="116" width="3" height="1" fill="#ff0000"/><line x1="500.5" y1="91" x2="500.5" y2="101" stroke="#0000ff"/><rect x="499" y="93" width="3" height="6" fill="#0000ff"/><line x1="506.5" y1="91" x2="506.5" y2="99" stroke="#ff0000"/><rect x="505" y="94" width="3" height="5" fill="#ff0000"/><line x1="512.5" y1="85" x2="512.5" y2="98" stroke="#ff0000"/><rect x="511" y="86" width="3" height="9" fill="#ff0000"/><line x1="518.5" y1="84" x2="518.5" y2="92" stroke="#0000ff"/><rect x="517" y="86" width="3" height="5" fill="#0000ff"/><line x1="524.5" y1="87" x2="524.5" y2="95" stroke="#0000ff"/><rect x="523" y="87" width="3" height="8" fill="#0000ff"/><line x1="530.5" y1="91" x2="530.5" y2="95" stroke="#0000ff"/><rect x="529" y="94" width="3" height="1" fill="#0000ff"/><line x1="536.5" y1="87" x2="536.5" y2="95" stroke="#0000ff"/><rect x="535" y="91" width="3" height="4" fill="#0000ff"/><line x1="542.5" y1="84" x2="542.5" y2="95" stroke="#ff0000"/><rect x="541" y="84" width="3" height="9" fill="#ff0000"/><line x1="548.5" y1="84" x2="548.5" y2="87" stroke="#ff0000"/><rect x="547" y="84" width="3" height="3" fill="#ff0000"/><line x1="554.5" y1="80" x2="554.5" y2="88" stroke="#ff0000"/><rect x="553" y="80" width="3" height="6" fill="#ff0000"/><line x1="560.5" y1="80" x2="560.5" y2="85" stroke="#0000ff"/><rect x="559" y="80" width="3" height="1" fill="#0000ff"/><line x1="566.5" y1="81" x2="566.5" y2="87" stroke="#0000ff"/><rect x="565" y="81" width="3" height="6" fill="#0000ff"/><line x1="572.5" y1="81" x2="572.5" y2="86" stroke="#ff0000"/><rect x="571" y="84" width="3" height="2" fill="#ff0000"/><line x1="578.5" y1="77" x2="578.5" y2="86" stroke="#ff0000"/><rect x="577" y="77" width="3" height="9" fill="#ff0000"/><line x1="584.5" y1="70" x2="584.5" y2="83" stroke="#ff0000"/><rect x="583" y="70" width="3" height="13" fill="#ff0000"/><line x1="590.5" y1="63" x2="590.5" y2="72" stroke="#ff0000"/><rect x="589" y="63" width="3" height="9" fill="#ff0000"/><line x1="596.5" y1="63" x2="596.5" y2="70" stroke="#0000ff"/><rect x="595" y="63" width="3" height="3" fill="#0000ff"/><line x1="602.5" y1="59" x2="602.5" y2="67" stroke="#ff0000"/><rect x="601" y="63" width="3" height="3" fill="#ff0000"/><line x1="608.5" y1="59" x2="608.5" y2="71" stroke="#0000ff"/><rect x="607" y="63" width="3" height="7" fill="#0000ff"/><line x1="614.5" y1="66" x2="614.5" y2="71" stroke="#ff0000"/><rect x="613" y="66" width="3" height="1" fill="#ff0000"/><line x1="620.5" y1="66" x2="620.5" y2="70" stroke="#ff0000"/><rect x="619" y="66" width="3" height="1" fill="#ff0000"/><line x1="626.5" y1="63" x2="626.5" y2="71" stroke="#0000ff"/><rect x="625" y="66" width="3" height="1" fill="#0000ff"/><line x1="632.5" y1="63" x2="632.5" y2="78" stroke="#0000ff"/><rect x="631" y="66" width="3" height="8" fill="#0000ff"/><line x1="638.5" y1="71" x2="638.5" y2="78" stroke="#0000ff"/><rect x="637" y="73" width="3" height="4" fill="#0000ff"/><line x1="644.5" y1="73" x2="644.5" y2="80" stroke="#0000ff"/><rect x="643" y="73" width="3" height="7" fill="#0000ff"/><line x1="650.5" y1="77" x2="650.5" y2="85" stroke="#0000ff"/><rect x="649" y="78" width="3" height="2" fill="#0000ff"/><line x1="656.5" y1="80" x2="656.5" y2="85" stroke="#0000ff"/><rect x="655" y="80" width="3" height="5" fill="#0000ff"/><line x1="662.5" y1="78" x2="662.5" y2="85" stroke="#0000ff"/><rect x="661" y="81" width="3" height="1" fill="#0000ff"/><line x1="668.5" y1="76" x2="668.5" y2="85" stroke="#ff0000"/><rect x="667" y="77" width="3" height="3" fill="#ff0000"/><line x1="674.5" y1="75" x2="674.5" y2="85" stroke="#ff0000"/><rect x="673" y="75" width="3" height="6" fill="#ff0000"/><line x1="680.5" y1="71" x2="680.5" y2="77" stroke="#0000ff"/><rect x="679" y="71" width="3" height="6" fill="#0000ff"/><line x1="686.5" y1="74" x2="686.5" y2="77" stroke="#ff0000"/><rect x="685" y="74" width="3" height="3" fill="#ff0000"/><line x1="692.5" y1="71" x2="692.5" y2="75" stroke="#ff0000"/><rect x="691" y="71" width="3" height="4" fill="#ff0000"/><line x1="698.5" y1="71" x2="698.5" y2="75" stroke="#0000ff"/><rect x="697" y="71" width="3" height="4" fill="#0000ff"/><line x1="704.5" y1="70" x2="704.5" y2="77" stroke="#ff0000"/><rect x="703" y="70" width="3" height="7" fill="#ff0000"/><line x1="710.5" y1="66" x2="710.5" y2="74" stroke="#0000ff"/><rect x="709" y="71" width="3" height="3" fill="#0000ff"/><line x1="716.5" y1="66" x2="716.5" y2="70" stroke="#0000ff"/><rect x="715" y="66" width="3" height="4" fill="#0000ff"/><line x1="722.5" y1="71" x2="722.5" y2="73" stroke="#ff0000"/><rect x="721" y="71" width="3" height="1" fill="#ff0000"/><line x1="728.5" y1="70" x2="728.5" y2="74" stroke="#ff0000"/><rect x="727" y="70" width="3" height="4" fill="#ff0000"/><line x1="734.5" y1="71" x2="734.5" y2="78" stroke="#0000ff"/><rect x="733" y="71" width="3" height="7" fill="#0000ff"/><line x1="740.5" y1="71" x2="740.5" y2="78" stroke="#ff0000"/><rect x="739" y="72" width="3" height="2" fill="#ff0000"/><line x1="746.5" y1="70" x2="746.5" y2="74" stroke="#ff0000"/><rect x="745" y="70" width="3" height="4" fill="#ff0000"/><line x1="752.5" y1="70" x2="752.5" y2="75" stroke="#0000ff"/><rect x="751" y="70" width="3" height="5" fill="#0000ff"/><line x1="758.5" y1="70" x2="758.5" y2="74" stroke="#0000ff"/><rect x="757" y="70" width="3" height="4" fill="#0000ff"/><line x1="764.5" y1="71" x2="764.5" y2="74" stroke="#ff0000"/><rect x="763" y="71" width="3" height="3" fill="#ff0000"/><line x1="770.5" y1="70" x2="770.5" y2="75" stroke="#0000ff"/><rect x="769" y="70" width="3" height="5" fill="#0000ff"/><line x1="776.5" y1="70" x2="776.5" y2="74" stroke="#ff0000"/><rect x="775" y="70" width="3" height="4" fill="#ff0000"/><line x1="782.5" y1="71" x2="782.5" y2="78" stroke="#0000ff"/><rect x="781" y="72" width="3" height="3" fill="#0000ff"/><line x1="788.5" y1="71" x2="788.5" y2="76" stroke="#0000ff"/><rect x="787" y="73" width="3" height="2" fill="#0000ff"/><line x1="794.5" y1="75" x2="794.5" y2="85" stroke="#0000ff"/><rect x="793" y="75" width="3" height="10" fill="#0000ff"/><line x1="800.5" y1="77" x2="800.5" y2="88" stroke="#0000ff"/><rect x="799" y="83" width="3" height="2" fill="#0000ff"/><line x1="806.5" y1="76" x2="806.5" y2="80" stroke="#ff0000"/><rect x="805" y="76" width="3" height="4" fill="#ff0000"/><line x1="812.5" y1="77" x2="812.5" y2="85" stroke="#0000ff"/><rect x="811" y="78" width="3" height="2" fill="#0000ff"/><line x1="818.5" y1="77" x2="818.5" y2="82" stroke="#ff0000"/><rect x="817" y="77" width="3" height="5" fill="#ff0000"/><line x1="824.5" y1="77" x2="824.5" y2="80" stroke="#0000ff"/><rect x="823" y="77" width="3" height="3" fill="#0000ff"/><line x1="830.5" y1="77" x2="830.5" y2="82" stroke="#0000ff"/><rect x="829" y="78" width="3" height="2" fill="#0000ff"/><line x1="836.5" y1="77" x2="836.5" y2="85" stroke="#ff0000"/><rect x="835" y="78" width="3" height="2" fill="#ff0000"/><line x1="842.5" y1="80" x2="842.5" y2="85" stroke="#0000ff"/><rect x="841" y="80" width="3" height="5" fill="#0000ff"/><line x1="848.5" y1="80" x2="848.5" y2="85" stroke="#ff0000"/><rect x="847" y="80" width="3" height="5" fill="#ff0000"/><line x1="854.5" y1="73" x2="854.5" y2="81" stroke="#ff0000"/><rect x="853" y="73" width="3" height="2" fill="#ff0000"/><line x1="860.5" y1="74" x2="860.5" y2="78" stroke="#ff0000"/><rect x="859" y="74" width="3" height="4" fill="#ff0000"/><line x1="866.5" y1="74" x2="866.5" y2="78" stroke="#ff0000"/><rect x="865" y="74" width="3" height="4" fill="#ff0000"/><line x1="872.5" y1="74" x2="872.5" y2="78" stroke="#0000ff"/><rect x="871" y="74" width="3" height="4" fill="#0000ff"/><line x1="878.5" y1="70" x2="878.5" y2="77" stroke="#ff0000"/><rect x="877" y="70" width="3" height="7" fill="#ff0000"/><line x1="884.5" y1="70" x2="884.5" y2="75" stroke="#0000ff"/><rect x="883" y="70" width="3" height="1" fill="#0000ff"/><line x1="890.5" y1="70" x2="890.5" y2="74" stroke="#ff0000"/><rect x="889" y="70" width="3" height="4" fill="#ff0000"/><line x1="896.5" y1="70" x2="896.5" y2="74" stroke="#0000ff"/><rect x="895" y="70" width="3" height="1" fill="#0000ff"/><line x1="902.5" y1="70" x2="902.5" y2="75" stroke="#0000ff"/><rect x="901" y="72" width="3" height="2" fill="#0000ff"/><line x1="908.5" y1="70" x2="908.5" y2="78" stroke="#0000ff"/><rect x="907" y="73" width="3" height="2" fill="#0000ff"/><line x1="914.5" y1="63" x2="914.5" y2="72" stroke="#ff0000"/><rect x="913" y="66" width="3" height="6" fill="#ff0000"/><line x1="920.5" y1="59" x2="920.5" y2="68" stroke="#ff0000"/><rect x="919" y="59" width="3" height="9" fill="#ff0000"/><line x1="926.5" y1="56" x2="926.5" y2="63" stroke="#0000ff"/><rect x="925" y="59" width="3" height="4" fill="#0000ff"/><line x1="932.5" y1="63" x2="932.5" y2="66" stroke="#0000ff"/><rect x="931" y="63" width="3" height="3" fill="#0000ff"/><line x1="938.5" y1="63" x2="938.5" y2="67" stroke="#0000ff"/><rect x="937" y="66" width="3" height="1" fill="#0000ff"/><line x1="944.5" y1="64" x2="944.5" y2="66" stroke="#ff0000"/><rect x="943" y="64" width="3" height="2" fill="#ff0000"/><line x1="950.5" y1="63" x2="950.5" y2="66" stroke="#0000ff"/><rect x="949" y="63" width="3" height="3" fill="#0000ff"/><line x1="956.5" y1="66" x2="956.5" y2="70" stroke="#ff0000"/><rect x="955" y="66" width="3" height="4" fill="#ff0000"/><line x1="962.5" y1="59" x2="962.5" y2="67" stroke="#ff0000"/><rect x="961" y="63" width="3" height="3" fill="#ff0000"/><line x1="968.5" y1="59" x2="968.5" y2="66" stroke="#0000ff"/><rect x="967" y="63" width="3" height="3" fill="#0000ff"/><line x1="974.5" y1="59" x2="974.5" y2="64" stroke="#ff0000"/><rect x="973" y="59" width="3" height="5" fill="#ff0000"/><line x1="980.5" y1="59" x2="980.5" y2="67" stroke="#0000ff"/><rect x="979" y="63" width="3" height="2" fill="#0000ff"/><line x1="986.5" y1="52" x2="986.5" y2="63" stroke="#ff0000"/><rect x="985" y="52" width="3" height="11" fill="#ff0000"/><line x1="992.5" y1="52" x2="992.5" y2="59" stroke="#0000ff"/><rect x="991" y="52" width="3" height="4" fill="#0000ff"/><line x1="998.5" y1="56" x2="998.5" y2="60" stroke="#0000ff"/><rect x="997" y="56" width="3" height="1" fill="#0000ff"/><line x1="1004.5" y1="52" x2="1004.5" y2="61" stroke="#0000ff"/><rect x="1003" y="56" width="3" height="3" fill="#0000ff"/><line x1="1010.5" y1="56" x2="1010.5" y2="63" stroke="#0000ff"/><rect x="1009" y="56" width="3" height="7" fill="#0000ff"/><line x1="1016.5" y1="59" x2="1016.5" y2="71" stroke="#0000ff"/><rect x="1015" y="63" width="3" height="7" fill="#0000ff"/><line x1="1022.5" y1="59" x2="1022.5" y2="70" stroke="#ff0000"/><rect x="1021" y="59" width="3" height="11" fill="#ff0000"/><line x1="1028.5" y1="52" x2="1028.5" y2="61" stroke="#ff0000"/><rect x="1027" y="52" width="3" height="9" fill="#ff0000"/><line x1="1034.5" y1="45" x2="1034.5" y2="56" stroke="#ff0000"/><rect x="1033" y="49" width="3" height="4" fill="#ff0000"/><line x1="1040.5" y1="42" x2="1040.5" y2="52" stroke="#ff0000"/><rect x="1039" y="45" width="3" height="5" fill="#ff0000"/><line x1="1046.5" y1="45" x2="1046.5" y2="59" stroke="#0000ff"/><rect x="1045" y="45" width="3" height="14" fill="#0000ff"/><line x1="1052.5" y1="51" x2="1052.5" y2="59" stroke="#ff0000"/><rect x="1051" y="51" width="3" height="8" fill="#ff0000"/><line x1="1058.5" y1="52" x2="1058.5" y2="57" stroke="#0000ff"/><rect x="1057" y="52" width="3" height="5" fill="#0000ff"/><line x1="1064.5" y1="49" x2="1064.5" y2="60" stroke="#ff0000"/><rect x="1063" y="52" width="3" height="5" fill="#ff0000"/><line x1="1070.5" y1="52" x2="1070.5" y2="58" stroke="#0000ff"/><rect x="1069" y="52" width="3" height="6" fill="#0000ff"/><line x1="1076.5" y1="56" x2="1076.5" y2="64" stroke="#0000ff"/><rect x="1075" y="56" width="3" height="8" fill="#0000ff"/><line x1="1082.5" y1="53" x2="1082.5" y2="67" stroke="#ff0000"/><rect x="1081" y="53" width="3" height="11" fill="#ff0000"/><line x1="1088.5" y1="55" x2="1088.5" y2="59" stroke="#ff0000"/><rect x="1087" y="55" width="3" height="4" fill="#ff0000"/><line x1="1100.5" y1="59" x2="1100.5" y2="64" stroke="#0000ff"/><rect x="1099" y="59" width="3" height="1" fill="#0000ff"/><line x1="1106.5" y1="58" x2="1106.5" y2="66" stroke="#0000ff"/><rect x="1105" y="58" width="3" height="8" fill="#0000ff"/><line x1="1112.5" y1="66" x2="1112.5" y2="71" stroke="#0000ff"/><rect x="1111" y="66" width="3" height="1" fill="#0000ff"/><line x1="1118.5" y1="66" x2="1118.5" y2="78" stroke="#0000ff"/><rect x="1117" y="66" width="3" height="12" fill="#0000ff"/><line x1="1124.5" y1="66" x2="1124.5" y2="78" stroke="#ff0000"/><rect x="1123" y="72" width="3" height="2" fill="#ff0000"/><line x1="1130.5" y1="66" x2="1130.5" y2="78" stroke="#0000ff"/><rect x="1129" y="72" width="3" height="2" fill="#0000ff"/><line x1="1136.5" y1="66" x2="1136.5" y2="74" stroke="#0000ff"/><rect x="1135" y="69" width="3" height="1" fill="#0000ff"/><line x1="1142.5" y1="73" x2="1142.5" y2="78" stroke="#0000ff"/><rect x="1141" y="73" width="3" height="5" fill="#0000ff"/><line x1="1148.5" y1="66" x2="1148.5" y2="78" stroke="#ff0000"/><rect x="1147" y="66" width="3" height="12" fill="#ff0000"/><line x1="1154.5" y1="66" x2="1154.5" y2="70" stroke="#0000ff"/><rect x="1153" y="66" width="3" height="4" fill="#0000ff"/><line x1="1160.5" y1="63" x2="1160.5" y2="74" stroke="#0000ff"/><rect x="1159" y="68" width="3" height="1" fill="#0000ff"/><line x1="1166.5" y1="63" x2="1166.5" y2="72" stroke="#ff0000"/><rect x="1165" y="66" width="3" height="6" fill="#ff0000"/><line x1="1172.5" y1="66" x2="1172.5" y2="74" stroke="#0000ff"/><rect x="1171" y="66" width="3" height="8" fill="#0000ff"/><line x1="1178.5" y1="63" x2="1178.5" y2="78" stroke="#0000ff"/><rect x="1177" y="70" width="3" height="4" fill="#0000ff"/><line x1="1184.5" y1="73" x2="1184.5" y2="81" stroke="#0000ff"/><rect x="1183" y="73" width="3" height="8" fill="#0000ff"/><line x1="1190.5" y1="77" x2="1190.5" y2="81" stroke="#ff0000"/><rect x="1189" y="77" width="3" height="1" fill="#ff0000"/><line x1="1196.5" y1="75" x2="1196.5" y2="81" stroke="#ff0000"/><rect x="1195" y="75" width="3" height="6" fill="#ff0000"/><line x1="1202.5" y1="66" x2="1202.5" y2="75" stroke="#ff0000"/><rect x="1201" y="70" width="3" height="5" fill="#ff0000"/><line x1="1208.5" y1="66" x2="1208.5" y2="67" stroke="#ff0000"/><rect x="1207" y="66" width="3" height="1" fill="#ff0000"/><line x1="1214.5" y1="63" x2="1214.5" y2="66" stroke="#ff0000"/><rect x="1213" y="63" width="3" height="3" fill="#ff0000"/><line x1="1220.5" y1="62" x2="1220.5" y2="65" stroke="#0000ff"/><rect x="1219" y="62" width="3" height="3" fill="#0000ff"/><line x1="1226.5" y1="55" x2="1226.5" y2="64" stroke="#ff0000"/><rect x="1225" y="56" width="3" height="3" fill="#ff0000"/><line x1="1232.5" y1="45" x2="1232.5" y2="57" stroke="#ff0000"/><rect x="1231" y="45" width="3" height="12" fill="#ff0000"/><line x1="1238.5" y1="46" x2="1238.5" y2="50" stroke="#0000ff"/><rect x="1237" y="49" width="3" height="1" fill="#0000ff"/><line x1="1244.5" y1="45" x2="1244.5" y2="50" stroke="#0000ff"/><rect x="1243" y="49" width="3" height="1" fill="#0000ff"/><line x1="1250.5" y1="49" x2="1250.5" y2="50" stroke="#0000ff"/><rect x="1249" y="49" width="3" height="1" fill="#0000ff"/><line x1="1256.5" y1="52" x2="1256.5" y2="52" stroke="#0000ff"/><rect x="1255" y="52" width="3" height="1" fill="#0000ff"/></g>
<defs><polyline id="p_green" fill="none" stroke-width="1" points="0,187.1 5.2,189.1 9.8,193.6 24.7,193 28,191.7 31.9,188.4 43,184.5 50.1,179.3 57.3,184.5 65.1,185.2 72.9,183.2 80.7,179.3 87.2,183.9 97.7,183.9 104.2,179.9 110.7,179.3 115.9,170.8 122.4,169.5 128.3,165.6 135.4,165.6 140.6,169.5 147.1,164.3 151.7,152.6 153.6,152 158.2,153.9 164.7,153.6 170,150.8 176.8,139.8 187.8,136.4 195.4,130.5 202.2,130.8 211.5,139.8 218.3,150.3 225,144.9 236.9,154.2 242.8,155 248.4,164.3 259.7,152.5 265.7,134.7 272.4,137.3 278.4,133.9 285.1,144 297,133 308.8,133 319,127.1 326.6,116.9 333.4,119 340,118.8 345.5,114.2 350,98.7 356.4,93.3 362.8,87.4 369.2,91.4 374.6,94.2 386.5,94.2 392.8,84.7 399.2,84.2 403.8,80.5 409.2,80.5 417.4,87.4 424.7,82.3 434.8,70.5 441.1,63.2 447.5,65.9 451.5,63.2 459.4,69.9 465.7,65.9 474.8,65.9 485.8,75 494,80.1 510,80.3 516.4,78.3 523.7,73.7 530,77.4 539.2,71 542.8,71 548.3,73.7 554.6,71 577.4,70.5 584.7,77 590.2,73.4 597.5,71 604.8,73.7 613.9,72.8 620.2,73.7 626.6,71 633.9,70.1 639.4,75.6 644.8,83.8 650.3,83.8 655.8,80.1 666.7,78.3 680,79.1 686.2,80.3 692.5,84.7 700.3,78.4 708.1,73.8 715.9,73 721.4,76.1 726.9,71.4 733.1,71.4 739.4,70.6 747.2,70.6 753.4,72.2 760.5,71.4 765.9,64.4 771.4,59.7 777.7,63.6 783.9,66.7 789.4,65.6 794.8,63.1 801.9,66.7 808.1,65.2 813.6,63.6 818.3,66.2 825.3,59.7 830.8,62.8 837,53.1 842.5,56.2 850,56.6 857.8,61.9 866.3,69.1 873.4,58 881.2,50.2 890.4,45.6 895.6,58 902.7,52.8 908.6,56 914.4,52.1 920.3,56.7 926.2,62.5 933.3,56.7 943.7,56.7 950.2,59.3 958,65.8 963.3,67.8 969.1,76.9 973.7,73.6 985.4,72.3 992.5,75.6 999,67.1 1004.9,69.7 1011.4,67.8 1020,70.4 1027.8,74.3 1035.6,80.1 1046,73.6 1053.8,69.1 1061.7,64.5 1070.8,61.9 1077.3,53.4 1083.1,45.6 1087.7,48.9 1098.1,49.5 1105.3,52.1 1113.7,45.6 1119.6,42.6"/></defs>
<g stroke="#008000" clip-path="url(#cg)"><use href="#p_green" x="0" y="0"/><use href="#p_green" x="-1" y="0"/><use href="#p_green" x="1" y="0"/><use href="#p_green" x="0" y="-1"/><use href="#p_green" x="0" y="1"/></g>
<defs><polyline id="p_green2" fill="none" stroke-width="1" points="1178.7,42.3 1184.1,51.9 1191.4,45 1197.3,45.5 1200.1,42.8 1203.7,42.8 1214.7,56.4 1220.6,50.1 1229.3,57.3 1233.8,56.4 1239.3,45 1244.7,51 1247.9,61.9 1250.2,72.8 1253.9,67.4 1257.5,64.6 1260.2,65.1"/></defs>
<g stroke="#008000" clip-path="url(#cg)"><use href="#p_green2" x="0" y="0"/><use href="#p_green2" x="-1" y="0"/><use href="#p_green2" x="1" y="0"/><use href="#p_green2" x="0" y="-1"/><use href="#p_green2" x="0" y="1"/></g>
<g fill="#008c00"><rect x="1" y="342" width="3" height="1"/><rect x="7" y="342" width="3" height="1"/><rect x="19" y="342" width="3" height="1"/><rect x="25" y="341" width="3" height="2"/><rect x="31" y="342" width="3" height="1"/><rect x="37" y="340" width="3" height="3"/><rect x="43" y="293" width="3" height="50"/><rect x="49" y="300" width="3" height="43"/><rect x="55" y="311" width="3" height="32"/><rect x="61" y="339" width="3" height="4"/><rect x="67" y="334" width="3" height="9"/><rect x="73" y="339" width="3" height="4"/><rect x="79" y="336" width="3" height="7"/><rect x="85" y="337" width="3" height="6"/><rect x="91" y="329" width="3" height="14"/><rect x="97" y="341" width="3" height="2"/><rect x="103" y="336" width="3" height="7"/><rect x="109" y="331" width="3" height="12"/><rect x="115" y="331" width="3" height="12"/><rect x="121" y="339" width="3" height="4"/><rect x="127" y="337" width="3" height="6"/><rect x="133" y="336" width="3" height="7"/><rect x="139" y="336" width="3" height="7"/><rect x="145" y="334" width="3" height="9"/><rect x="151" y="342" width="3" height="1"/><rect x="157" y="340" width="3" height="3"/><rect x="163" y="338" width="3" height="5"/><rect x="169" y="339" width="3" height="4"/><rect x="175" y="340" width="3" height="3"/><rect x="181" y="278" width="3" height="65"/><rect x="187" y="339" width="3" height="4"/><rect x="193" y="335" width="3" height="8"/><rect x="199" y="338" width="3" height="5"/><rect x="205" y="340" width="3" height="3"/><rect x="211" y="341" width="3" height="2"/><rect x="217" y="342" width="3" height="1"/><rect x="229" y="342" width="3" height="1"/><rect x="235" y="342" width="3" height="1"/><rect x="247" y="340" width="3" height="3"/><rect x="253" y="337" width="3" height="6"/><rect x="259" y="342" width="3" height="1"/><rect x="265" y="336" width="3" height="7"/><rect x="271" y="335" width="3" height="8"/><rect x="277" y="340" width="3" height="3"/><rect x="283" y="341" width="3" height="2"/><rect x="289" y="340" width="3" height="3"/><rect x="295" y="334" width="3" height="9"/><rect x="301" y="329" width="3" height="14"/><rect x="307" y="337" width="3" height="6"/><rect x="313" y="334" width="3" height="9"/><rect x="319" y="329" width="3" height="14"/><rect x="325" y="320" width="3" height="23"/><rect x="331" y="333" width="3" height="10"/><rect x="337" y="330" width="3" height="13"/><rect x="343" y="328" width="3" height="15"/><rect x="349" y="328" width="3" height="15"/><rect x="355" y="332" width="3" height="11"/><rect x="361" y="335" width="3" height="8"/><rect x="367" y="334" width="3" height="9"/><rect x="373" y="337" width="3" height="6"/><rect x="379" y="336" width="3" height="7"/><rect x="385" y="335" width="3" height="8"/><rect x="391" y="337" width="3" height="6"/><rect x="397" y="303" width="3" height="40"/><rect x="403" y="336" width="3" height="7"/><rect x="409" y="337" width="3" height="6"/><rect x="415" y="329" width="3" height="14"/><rect x="421" y="335" width="3" height="8"/><rect x="427" y="337" width="3" height="6"/><rect x="433" y="338" width="3" height="5"/><rect x="439" y="335" width="3" height="8"/><rect x="445" y="337" width="3" height="6"/><rect x="451" y="340" width="3" height="3"/><rect x="457" y="338" width="3" height="5"/><rect x="463" y="334" width="3" height="9"/><rect x="469" y="327" width="3" height="16"/><rect x="475" y="321" width="3" height="22"/><rect x="481" y="322" width="3" height="21"/><rect x="493" y="330" width="3" height="13"/><rect x="499" y="323" width="3" height="20"/><rect x="505" y="334" width="3" height="9"/><rect x="511" y="334" width="3" height="9"/><rect x="517" y="338" width="3" height="5"/><rect x="523" y="340" width="3" height="3"/><rect x="529" y="339" width="3" height="4"/><rect x="535" y="338" width="3" height="5"/><rect x="541" y="337" width="3" height="6"/><rect x="547" y="340" width="3" height="3"/><rect x="553" y="339" width="3" height="4"/><rect x="559" y="340" width="3" height="3"/><rect x="565" y="339" width="3" height="4"/><rect x="571" y="339" width="3" height="4"/><rect x="577" y="334" width="3" height="9"/><rect x="583" y="334" width="3" height="9"/><rect x="589" y="327" width="3" height="16"/><rect x="595" y="335" width="3" height="8"/><rect x="601" y="336" width="3" height="7"/><rect x="607" y="338" width="3" height="5"/><rect x="613" y="338" width="3" height="5"/><rect x="619" y="336" width="3" height="7"/><rect x="625" y="336" width="3" height="7"/><rect x="631" y="336" width="3" height="7"/><rect x="637" y="335" width="3" height="8"/><rect x="643" y="337" width="3" height="6"/><rect x="649" y="340" width="3" height="3"/><rect x="655" y="342" width="3" height="1"/><rect x="661" y="342" width="3" height="1"/><rect x="667" y="338" width="3" height="5"/><rect x="673" y="339" width="3" height="4"/><rect x="679" y="339" width="3" height="4"/><rect x="685" y="341" width="3" height="2"/><rect x="691" y="340" width="3" height="3"/><rect x="697" y="340" width="3" height="3"/><rect x="703" y="341" width="3" height="2"/><rect x="709" y="341" width="3" height="2"/><rect x="715" y="342" width="3" height="1"/><rect x="721" y="342" width="3" height="1"/><rect x="727" y="342" width="3" height="1"/><rect x="733" y="341" width="3" height="2"/><rect x="739" y="342" width="3" height="1"/><rect x="757" y="342" width="3" height="1"/><rect x="769" y="341" width="3" height="2"/><rect x="775" y="342" width="3" height="1"/><rect x="781" y="341" width="3" height="2"/><rect x="793" y="334" width="3" height="9"/><rect x="799" y="335" width="3" height="8"/><rect x="805" y="340" width="3" height="3"/><rect x="811" y="342" width="3" height="1"/><rect x="817" y="341" width="3" height="2"/><rect x="823" y="342" width="3" height="1"/><rect x="829" y="342" width="3" height="1"/><rect x="835" y="342" width="3" height="1"/><rect x="841" y="342" width="3" height="1"/><rect x="847" y="342" width="3" height="1"/><rect x="853" y="342" width="3" height="1"/><rect x="859" y="342" width="3" height="1"/><rect x="865" y="342" width="3" height="1"/><rect x="871" y="341" width="3" height="2"/><rect x="877" y="341" width="3" height="2"/><rect x="889" y="333" width="3" height="10"/><rect x="895" y="342" width="3" height="1"/><rect x="901" y="341" width="3" height="2"/><rect x="907" y="342" width="3" height="1"/><rect x="913" y="335" width="3" height="8"/><rect x="919" y="336" width="3" height="7"/><rect x="925" y="336" width="3" height="7"/><rect x="931" y="339" width="3" height="4"/><rect x="937" y="342" width="3" height="1"/><rect x="943" y="342" width="3" height="1"/><rect x="949" y="338" width="3" height="5"/><rect x="955" y="341" width="3" height="2"/><rect x="961" y="339" width="3" height="4"/><rect x="967" y="341" width="3" height="2"/><rect x="973" y="340" width="3" height="3"/><rect x="979" y="340" width="3" height="3"/><rect x="985" y="336" width="3" height="7"/><rect x="991" y="336" width="3" height="7"/><rect x="997" y="342" width="3" height="1"/><rect x="1003" y="341" width="3" height="2"/><rect x="1009" y="338" width="3" height="5"/><rect x="1015" y="337" width="3" height="6"/><rect x="1021" y="337" width="3" height="6"/><rect x="1027" y="339" width="3" height="4"/><rect x="1033" y="334" width="3" height="9"/><rect x="1039" y="336" width="3" height="7"/><rect x="1045" y="334" width="3" height="9"/><rect x="1051" y="340" width="3" height="3"/><rect x="1057" y="338" width="3" height="5"/><rect x="1063" y="339" width="3" height="4"/><rect x="1069" y="340" width="3" height="3"/><rect x="1075" y="339" width="3" height="4"/><rect x="1081" y="341" width="3" height="2"/><rect x="1087" y="342" width="3" height="1"/><rect x="1093" y="341" width="3" height="2"/><rect x="1099" y="341" width="3" height="2"/><rect x="1105" y="341" width="3" height="2"/><rect x="1111" y="341" width="3" height="2"/><rect x="1117" y="339" width="3" height="4"/><rect x="1123" y="342" width="3" height="1"/><rect x="1129" y="342" width="3" height="1"/><rect x="1135" y="342" width="3" height="1"/><rect x="1141" y="342" width="3" height="1"/><rect x="1147" y="339" width="3" height="4"/><rect x="1153" y="342" width="3" height="1"/><rect x="1159" y="342" width="3" height="1"/><rect x="1171" y="342" width="3" height="1"/><rect x="1177" y="341" width="3" height="2"/><rect x="1183" y="341" width="3" height="2"/><rect x="1195" y="341" width="3" height="2"/><rect x="1201" y="340" width="3" height="3"/><rect x="1207" y="341" width="3" height="2"/><rect x="1213" y="340" width="3" height="3"/><rect x="1219" y="342" width="3" height="1"/><rect x="1225" y="341" width="3" height="2"/><rect x="1231" y="339" width="3" height="4"/><rect x="1237" y="341" width="3" height="2"/><rect x="1243" y="337" width="3" height="6"/><rect x="1255" y="338" width="3" height="5"/></g>
<line x1="0" y1="431.5" x2="1260" y2="431.5" stroke="#808080" stroke-width="1"/>
<g stroke="#ff0000" stroke-width="1"><line x1="2.5" y1="431.0" x2="2.5" y2="438.0"/><line x1="8.5" y1="431.0" x2="8.5" y2="439.0"/><line x1="14.5" y1="431.0" x2="14.5" y2="438.0"/><line x1="20.5" y1="431.0" x2="20.5" y2="438.0"/><line x1="26.5" y1="431.0" x2="26.5" y2="438.0"/><line x1="32.5" y1="431.0" x2="32.5" y2="437.0"/><line x1="38.5" y1="431.0" x2="38.5" y2="435.0"/><line x1="44.5" y1="431.0" x2="44.5" y2="433.0"/><line x1="50.5" y1="431.0" x2="50.5" y2="435.0"/><line x1="56.5" y1="431.0" x2="56.5" y2="435.0"/><line x1="62.5" y1="431.0" x2="62.5" y2="435.0"/><line x1="68.5" y1="431.0" x2="68.5" y2="435.0"/><line x1="74.5" y1="431.0" x2="74.5" y2="437.0"/><line x1="80.5" y1="431.0" x2="80.5" y2="436.0"/><line x1="86.5" y1="431.0" x2="86.5" y2="436.0"/><line x1="92.5" y1="431.0" x2="92.5" y2="436.0"/><line x1="98.5" y1="431.0" x2="98.5" y2="435.0"/><line x1="104.5" y1="431.0" x2="104.5" y2="436.0"/><line x1="110.5" y1="431.0" x2="110.5" y2="434.0"/><line x1="116.5" y1="431.0" x2="116.5" y2="434.0"/><line x1="122.5" y1="431.0" x2="122.5" y2="434.0"/><line x1="128.5" y1="431.0" x2="128.5" y2="434.0"/><line x1="134.5" y1="431.0" x2="134.5" y2="435.0"/><line x1="140.5" y1="431.0" x2="140.5" y2="437.0"/><line x1="146.5" y1="431.0" x2="146.5" y2="434.0"/><line x1="152.5" y1="431.0" x2="152.5" y2="433.0"/><line x1="158.5" y1="431.0" x2="158.5" y2="433.0"/><line x1="164.5" y1="431.0" x2="164.5" y2="433.0"/><line x1="170.5" y1="431.0" x2="170.5" y2="433.0"/><line x1="176.5" y1="431.0" x2="176.5" y2="433.0"/><line x1="182.5" y1="430.0" x2="182.5" y2="432.0"/><line x1="188.5" y1="430.0" x2="188.5" y2="432.0"/><line x1="194.5" y1="428.0" x2="194.5" y2="432.0"/><line x1="200.5" y1="427.0" x2="200.5" y2="432.0"/><line x1="206.5" y1="427.0" x2="206.5" y2="432.0"/><line x1="212.5" y1="428.0" x2="212.5" y2="432.0"/><line x1="218.5" y1="429.0" x2="218.5" y2="432.0"/><line x1="224.5" y1="429.0" x2="224.5" y2="432.0"/><line x1="230.5" y1="429.0" x2="230.5" y2="432.0"/><line x1="236.5" y1="429.0" x2="236.5" y2="432.0"/><line x1="242.5" y1="430.0" x2="242.5" y2="432.0"/><line x1="248.5" y1="431.0" x2="248.5" y2="432.0"/><line x1="254.5" y1="430.0" x2="254.5" y2="432.0"/><line x1="260.5" y1="430.0" x2="260.5" y2="432.0"/><line x1="266.5" y1="428.0" x2="266.5" y2="432.0"/><line x1="272.5" y1="427.0" x2="272.5" y2="432.0"/><line x1="278.5" y1="426.0" x2="278.5" y2="432.0"/><line x1="284.5" y1="426.0" x2="284.5" y2="432.0"/><line x1="290.5" y1="427.0" x2="290.5" y2="432.0"/><line x1="296.5" y1="427.0" x2="296.5" y2="432.0"/><line x1="302.5" y1="425.0" x2="302.5" y2="432.0"/><line x1="308.5" y1="424.0" x2="308.5" y2="432.0"/><line x1="314.5" y1="425.0" x2="314.5" y2="432.0"/><line x1="320.5" y1="425.0" x2="320.5" y2="432.0"/><line x1="326.5" y1="423.0" x2="326.5" y2="432.0"/><line x1="332.5" y1="422.0" x2="332.5" y2="432.0"/><line x1="338.5" y1="422.0" x2="338.5" y2="432.0"/><line x1="344.5" y1="422.0" x2="344.5" y2="432.0"/><line x1="350.5" y1="422.0" x2="350.5" y2="432.0"/><line x1="356.5" y1="424.0" x2="356.5" y2="432.0"/><line x1="362.5" y1="427.0" x2="362.5" y2="432.0"/><line x1="374.5" y1="431.0" x2="374.5" y2="433.0"/><line x1="380.5" y1="431.0" x2="380.5" y2="435.0"/><line x1="386.5" y1="431.0" x2="386.5" y2="438.0"/><line x1="392.5" y1="431.0" x2="392.5" y2="440.0"/><line x1="398.5" y1="431.0" x2="398.5" y2="443.0"/><line x1="404.5" y1="431.0" x2="404.5" y2="444.0"/><line x1="410.5" y1="431.0" x2="410.5" y2="442.0"/><line x1="416.5" y1="431.0" x2="416.5" y2="436.0"/><line x1="422.5" y1="431.0" x2="422.5" y2="434.0"/><line x1="434.5" y1="431.0" x2="434.5" y2="432.0"/><line x1="440.5" y1="431.0" x2="440.5" y2="432.0"/><line x1="452.5" y1="431.0" x2="452.5" y2="432.0"/><line x1="458.5" y1="431.0" x2="458.5" y2="432.0"/><line x1="464.5" y1="430.0" x2="464.5" y2="432.0"/><line x1="470.5" y1="429.0" x2="470.5" y2="432.0"/><line x1="476.5" y1="427.0" x2="476.5" y2="432.0"/><line x1="482.5" y1="427.0" x2="482.5" y2="432.0"/><line x1="488.5" y1="427.0" x2="488.5" y2="432.0"/><line x1="494.5" y1="427.0" x2="494.5" y2="432.0"/><line x1="500.5" y1="424.0" x2="500.5" y2="432.0"/><line x1="506.5" y1="421.0" x2="506.5" y2="432.0"/><line x1="512.5" y1="419.0" x2="512.5" y2="432.0"/><line x1="518.5" y1="420.0" x2="518.5" y2="432.0"/><line x1="524.5" y1="422.0" x2="524.5" y2="432.0"/><line x1="530.5" y1="424.0" x2="530.5" y2="432.0"/><line x1="536.5" y1="426.0" x2="536.5" y2="432.0"/><line x1="542.5" y1="426.0" x2="542.5" y2="432.0"/><line x1="548.5" y1="427.0" x2="548.5" y2="432.0"/><line x1="554.5" y1="427.0" x2="554.5" y2="432.0"/><line x1="560.5" y1="428.0" x2="560.5" y2="432.0"/><line x1="566.5" y1="431.0" x2="566.5" y2="432.0"/><line x1="584.5" y1="431.0" x2="584.5" y2="432.0"/><line x1="590.5" y1="429.0" x2="590.5" y2="432.0"/><line x1="596.5" y1="429.0" x2="596.5" y2="432.0"/><line x1="602.5" y1="429.0" x2="602.5" y2="432.0"/><line x1="614.5" y1="431.0" x2="614.5" y2="432.0"/><line x1="620.5" y1="431.0" x2="620.5" y2="433.0"/><line x1="626.5" y1="431.0" x2="626.5" y2="434.0"/><line x1="632.5" y1="431.0" x2="632.5" y2="436.0"/><line x1="638.5" y1="431.0" x2="638.5" y2="439.0"/><line x1="644.5" y1="431.0" x2="644.5" y2="441.0"/><line x1="650.5" y1="431.0" x2="650.5" y2="442.0"/><line x1="656.5" y1="431.0" x2="656.5" y2="443.0"/><line x1="662.5" y1="431.0" x2="662.5" y2="443.0"/><line x1="668.5" y1="431.0" x2="668.5" y2="442.0"/><line x1="674.5" y1="431.0" x2="674.5" y2="441.0"/><line x1="680.5" y1="431.0" x2="680.5" y2="440.0"/><line x1="686.5" y1="431.0" x2="686.5" y2="439.0"/><line x1="692.5" y1="431.0" x2="692.5" y2="437.0"/><line x1="698.5" y1="431.0" x2="698.5" y2="437.0"/><line x1="704.5" y1="431.0" x2="704.5" y2="435.0"/><line x1="710.5" y1="431.0" x2="710.5" y2="435.0"/><line x1="716.5" y1="431.0" x2="716.5" y2="434.0"/><line x1="722.5" y1="431.0" x2="722.5" y2="434.0"/><line x1="728.5" y1="431.0" x2="728.5" y2="434.0"/><line x1="734.5" y1="431.0" x2="734.5" y2="435.0"/><line x1="740.5" y1="431.0" x2="740.5" y2="435.0"/><line x1="746.5" y1="431.0" x2="746.5" y2="435.0"/><line x1="752.5" y1="431.0" x2="752.5" y2="435.0"/><line x1="758.5" y1="431.0" x2="758.5" y2="434.0"/><line x1="764.5" y1="431.0" x2="764.5" y2="434.0"/><line x1="770.5" y1="431.0" x2="770.5" y2="434.0"/><line x1="776.5" y1="431.0" x2="776.5" y2="434.0"/><line x1="782.5" y1="431.0" x2="782.5" y2="433.0"/><line x1="788.5" y1="431.0" x2="788.5" y2="434.0"/><line x1="794.5" y1="431.0" x2="794.5" y2="436.0"/><line x1="800.5" y1="431.0" x2="800.5" y2="438.0"/><line x1="806.5" y1="431.0" x2="806.5" y2="438.0"/><line x1="812.5" y1="431.0" x2="812.5" y2="437.0"/><line x1="818.5" y1="431.0" x2="818.5" y2="436.0"/><line x1="824.5" y1="431.0" x2="824.5" y2="436.0"/><line x1="830.5" y1="431.0" x2="830.5" y2="435.0"/><line x1="836.5" y1="431.0" x2="836.5" y2="435.0"/><line x1="842.5" y1="431.0" x2="842.5" y2="435.0"/><line x1="848.5" y1="431.0" x2="848.5" y2="434.0"/><line x1="854.5" y1="431.0" x2="854.5" y2="433.0"/><line x1="866.5" y1="431.0" x2="866.5" y2="432.0"/><line x1="872.5" y1="431.0" x2="872.5" y2="432.0"/><line x1="878.5" y1="430.0" x2="878.5" y2="432.0"/><line x1="884.5" y1="429.0" x2="884.5" y2="432.0"/><line x1="890.5" y1="429.0" x2="890.5" y2="432.0"/><line x1="896.5" y1="429.0" x2="896.5" y2="432.0"/><line x1="902.5" y1="429.0" x2="902.5" y2="432.0"/><line x1="908.5" y1="429.0" x2="908.5" y2="432.0"/><line x1="914.5" y1="429.0" x2="914.5" y2="432.0"/><line x1="920.5" y1="428.0" x2="920.5" y2="432.0"/><line x1="926.5" y1="427.0" x2="926.5" y2="432.0"/><line x1="932.5" y1="428.0" x2="932.5" y2="432.0"/><line x1="938.5" y1="429.0" x2="938.5" y2="432.0"/><line x1="944.5" y1="429.0" x2="944.5" y2="432.0"/><line x1="950.5" y1="430.0" x2="950.5" y2="432.0"/><line x1="956.5" y1="431.0" x2="956.5" y2="432.0"/><line x1="962.5" y1="431.0" x2="962.5" y2="432.0"/><line x1="968.5" y1="431.0" x2="968.5" y2="432.0"/><line x1="974.5" y1="431.0" x2="974.5" y2="432.0"/><line x1="980.5" y1="431.0" x2="980.5" y2="432.0"/><line x1="986.5" y1="429.0" x2="986.5" y2="432.0"/><line x1="992.5" y1="429.0" x2="992.5" y2="432.0"/><line x1="998.5" y1="429.0" x2="998.5" y2="432.0"/><line x1="1004.5" y1="430.0" x2="1004.5" y2="432.0"/><line x1="1016.5" y1="431.0" x2="1016.5" y2="433.0"/><line x1="1022.5" y1="431.0" x2="1022.5" y2="433.0"/><line x1="1034.5" y1="430.0" x2="1034.5" y2="432.0"/><line x1="1040.5" y1="428.0" x2="1040.5" y2="432.0"/><line x1="1046.5" y1="431.0" x2="1046.5" y2="432.0"/><line x1="1052.5" y1="431.0" x2="1052.5" y2="432.0"/><line x1="1070.5" y1="431.0" x2="1070.5" y2="432.0"/><line x1="1076.5" y1="431.0" x2="1076.5" y2="434.0"/><line x1="1082.5" y1="431.0" x2="1082.5" y2="434.0"/><line x1="1088.5" y1="431.0" x2="1088.5" y2="433.0"/><line x1="1094.5" y1="431.0" x2="1094.5" y2="433.0"/><line x1="1100.5" y1="431.0" x2="1100.5" y2="434.0"/><line x1="1106.5" y1="431.0" x2="1106.5" y2="436.0"/><line x1="1112.5" y1="431.0" x2="1112.5" y2="437.0"/><line x1="1118.5" y1="431.0" x2="1118.5" y2="439.0"/><line x1="1124.5" y1="431.0" x2="1124.5" y2="440.0"/><line x1="1130.5" y1="431.0" x2="1130.5" y2="440.0"/><line x1="1136.5" y1="431.0" x2="1136.5" y2="439.0"/><line x1="1142.5" y1="431.0" x2="1142.5" y2="439.0"/><line x1="1148.5" y1="431.0" x2="1148.5" y2="437.0"/><line x1="1154.5" y1="431.0" x2="1154.5" y2="435.0"/><line x1="1160.5" y1="431.0" x2="1160.5" y2="434.0"/><line x1="1166.5" y1="431.0" x2="1166.5" y2="432.0"/><line x1="1172.5" y1="431.0" x2="1172.5" y2="433.0"/><line x1="1178.5" y1="431.0" x2="1178.5" y2="433.0"/><line x1="1184.5" y1="431.0" x2="1184.5" y2="434.0"/><line x1="1190.5" y1="431.0" x2="1190.5" y2="434.0"/><line x1="1196.5" y1="431.0" x2="1196.5" y2="433.0"/><line x1="1208.5" y1="430.0" x2="1208.5" y2="432.0"/><line x1="1214.5" y1="428.0" x2="1214.5" y2="432.0"/><line x1="1220.5" y1="427.0" x2="1220.5" y2="432.0"/><line x1="1226.5" y1="425.0" x2="1226.5" y2="432.0"/><line x1="1232.5" y1="422.0" x2="1232.5" y2="432.0"/><line x1="1238.5" y1="421.0" x2="1238.5" y2="432.0"/><line x1="1244.5" y1="421.0" x2="1244.5" y2="432.0"/><line x1="1250.5" y1="422.0" x2="1250.5" y2="432.0"/><line x1="1256.5" y1="424.0" x2="1256.5" y2="432.0"/></g>
<polyline fill="none" stroke="#ffff00" stroke-width="1" points="0,410.3 20,416.1 32.3,418.4 44.6,416.1 61.5,420.7 68.4,421.5 75.3,425.3 92.2,428.4 104.5,430.3 116.8,430 130.7,433 140.7,436.4 147.6,433.8 163,433 176.8,433 189.1,430 202.9,424.6 210,424.1 210,424.9 228.4,422.7 257.1,422.3 269.4,417.6 283.8,412.4 296.1,411 302.2,406.5 308.4,403.8 316.6,402.8 326.8,396.6 341.2,389.5 350.4,386 356.5,386.4 365.8,390.5 374,396.2 384.2,402.8 394.5,411 404.7,418.2 409.8,418.6 417,415.1 427.3,411 437.5,412.6 445.7,411 456,408.9 470.3,406.9 478.5,402.8 486.7,400.7 490,400.3 490,400.3 495.1,399.3 504.3,390.5 512.5,383.3 520.7,380.2 537.1,380.9 551.5,378.2 560.7,378.2 572,381.3 580.2,381.3 592.5,377.8 601.7,377.2 613,379.8 625.3,383.3 637.6,390.5 649.9,400.7 664.2,407.9 680.6,412 695,412.4 715.5,413.5 725.7,414.7 740.1,419.2 756.4,420.2 770,421.2 770,421.2 784.3,422.3 792.5,425.3 800.7,430.1 817.1,432.5 829.4,433.1 839.7,436.2 847.9,436.2 858.1,433.9 866.3,431.5 878.6,429.4 893,426.4 909.4,427 917.6,423.7 927.8,420.2 950.4,420.2 968.8,420.2 983.2,418.6 991.4,416.5 1005.7,416.5 1018,421.2 1028.2,419.2 1040.5,415.5 1046.7,416.3 1055.2,416.3 1066.9,417.7 1077,421.4 1090.5,422.5 1102.3,424.7 1112.4,428.9 1124.2,437.4 1134.3,440.7 1142.7,443.6 1149.4,441.6 1161.2,441.1 1168,439.4 1174.7,440.4 1184.8,443.6 1191.5,444.1 1200,442.4 1211.7,437.4 1221.8,434 1232,426.4 1242.1,420.5 1250.5,417.7 1259.9,415.1"/>
<polyline fill="none" stroke="#0000ff" stroke-width="1" points="0,403.1 20,409.2 44.6,414.6 68.4,418.4 92.2,423.8 116.8,427.6 130.7,429.2 140.7,431.5 163,432.3 189.1,432.3 199.8,430 210,428.4 210,428.4 228.4,425.3 260.2,423.3 279.7,418.8 300.2,414.7 320.7,408.9 339.1,401.8 353.5,395.6 361.7,393.6 371.9,394 386.3,397.7 400.6,402.8 410.9,407.9 421.1,410.4 437.5,410.4 443.7,411.4 451.9,410.4 466.2,410 476.4,407.9 484.6,405.9 490,405.5 490,405.5 498.2,403.2 516.6,393.6 535.1,388 557.6,382.7 580.2,382.3 600.7,379.6 617.1,379.8 633.5,382.7 649.9,388.4 670.4,398.7 684.7,404.8 701.1,408.3 721.6,411 742.1,414.7 756.4,417.1 766.7,417.6 770,418.8 770,418.2 784.3,419.2 796.6,422.9 811,426.4 827.4,430.1 839.7,431.9 847.9,433.5 872.5,433.1 884.8,430.5 897.1,430.1 913.5,428.4 929.9,424.3 946.3,422.9 964.7,421.6 985.2,420.2 1001.6,418.2 1011.9,418.2 1018,419.8 1034.4,419.2 1044.6,418.2 1050.1,417.1 1066.9,417.5 1080.4,419.3 1097.2,420.5 1110.7,423.9 1124.2,428.1 1137.7,432.3 1147.8,436.2 1157.9,438.2 1174.7,438.5 1183.1,440.4 1193.2,440.7 1198.3,441.6 1210.1,441.2 1221.8,439 1233.6,434 1245.4,428.9 1255.5,425.2 1259.9,423.5"/>
<line x1="0" y1="491.5" x2="1260" y2="491.5" stroke="#0000ff" stroke-width="1"/>
<line x1="0" y1="533.5" x2="1260" y2="533.5" stroke="#ff0000" stroke-width="1"/>
<polyline fill="none" stroke="#ff0000" stroke-width="1" points="0,512.3 5.7,519.9 12.4,523.3 19,521.4 32.4,519.9 38.1,515.7 44.7,508.1 50.4,506.2 56.1,507.1 62.8,513.4 68.5,514.7 74.6,521.4 79.9,523.7 86,527.7 92.3,527.1 98,527.1 104.3,531.3 110.4,529.6 116.5,530 122.8,529 128.5,531.9 135.1,535.7 140.8,537.6 146.6,533.8 152.6,520.4 158.9,508.1 164.6,504.6 177,506.2 182.7,504.3 188.4,499.5 194.1,492.8 200.2,489 206.5,488.5 212.8,490 218.9,491.9 224.6,494.4 230.3,492.5 237,492.8 242.7,494.7 247.4,497.6 254.1,496.6 260,495.1 266.7,492.5 272.4,491.9 278.1,491.5 283.8,490.6 290.5,490.6 296.2,490.6 302.3,488.1 308.5,485.2 315.2,483.7 320.5,484.3 326.6,483.7 333.3,481.8 339,480.5 347.6,480.8 357.1,482.9 362.8,487.1 368.5,493.8 374.2,500.5 380.3,506.2 386.6,512.8 392.3,522.3 398.4,532.2 404.7,535.1 410.7,532.8 416.5,521.4 422.7,510.9 428.4,500.8 434.2,497.6 440.8,497.6 446.5,494.7 452.2,490.9 458.9,487.1 469.4,484.3 476.6,482.4 482.7,482.4 488.4,483.3 495.1,484.3 500.8,484.8 507.4,483.7 513.1,483.3 520,484.3 527.6,486.2 536.2,488.1 548.5,484.3 559,478.6 566.6,480.5 572.3,481.4 579,482.4 589.5,479.5 596.1,478.9 602.8,480.5 608.5,484.3 619,489 625.6,490.9 631.3,493.8 638,501.4 644.7,511.9 650.4,517.6 656.1,524.2 662.7,530 668.5,532.8 674.5,530 680.8,526.1 686.5,523.3 692.2,519.5 698,514.7 704.6,509 710.3,506.2 717,502 722.7,498.2 728.4,494.2 734.7,497.2 740.8,501.4 746.5,503.3 752.6,501.4 758.9,500.5 764.6,501 770.3,504.3 776,506.2 780,507.7 788.6,507.7 794.3,515.7 800,525.2 806.6,529 813.3,525.6 819,519.9 824.7,516.6 830.4,516.3 836.1,517.2 842.4,520.4 848.5,521.8 854.6,519.9 859.9,512.8 866.6,504.3 872.3,498.5 878.4,492.5 884.3,490.9 890.4,486.2 896.5,483.3 902.8,483.3 908.5,486.7 914.8,489 920.5,488.5 926.6,487.5 932.3,490 938.4,496.6 944.1,500.5 950.3,503.3 956.6,505.8 962.3,507.5 968.4,507.5 974.1,504.3 980.8,502 986.5,494.7 993.2,491.9 998.9,488.5 1004.6,490.9 1010.3,498.5 1016.6,510.9 1022.7,516.1 1028.4,512.8 1034.1,501.4 1040,491.9 1040.5,491.9 1046.7,493.4 1052.8,496.3 1058.9,502.4 1064.8,502.4 1070.9,504.6 1077,508.1 1083.3,510.4 1089,511.3 1095.7,510 1100.8,510.4 1106.7,517.6 1112.8,525.2 1118.9,535.3 1125.2,538.1 1130.9,540 1137.5,539.5 1142.7,540.4 1149,537 1154.7,532.8 1160.4,528.1 1166.5,523.7 1172.7,523.3 1178.5,525.6 1184.5,532.8 1190.8,534.7 1196.5,531.9 1202.8,520.4 1208.9,508.1 1214.2,498.5 1220.3,490.9 1226,484.8 1232.7,481 1238.4,480.5 1245.1,480.5 1250.8,482.4 1256.5,484.8 1259.9,485.8"/>
<polyline fill="none" stroke="#0000ff" stroke-width="1" points="0,521.4 2.9,525.2 8.6,523.9 14.8,518.5 20,521.4 25.7,522.3 32.4,516.6 38.1,508.1 44.3,498.5 50.4,510.9 56.1,510.9 62.8,517.2 68.5,515.3 74.6,530.9 79.9,528.1 86,525.2 92.3,530 98,527.1 104.3,537.2 110.4,524.8 116.5,530.5 122.8,531.9 128.5,534.7 135.1,540.4 140.8,539.5 146.6,515.7 152.6,502.4 158.9,504.3 164.6,506.2 177,506.2 182.7,498.5 188.4,493.8 194.1,489 200.2,487.1 206.5,489 212.8,495.3 218.9,492.8 224.6,493.8 230.3,490 237,495.7 242.7,498.2 247.4,499.5 254.1,495.7 260,492.8 266.7,490 272.4,493.2 278.1,490.6 283.8,488.5 290.5,492.3 296.2,489 302.3,483.3 315.2,483.3 320.5,486.2 326.6,481.4 333.3,479.1 341.8,480.8 351.4,481.4 357.1,485.2 362.8,492.8 368.5,503.3 374.2,503.3 380.3,509 386.6,525.2 392.3,531.9 398.4,539.5 404.7,532.8 410.7,525.2 416.5,507.1 422.7,500.5 428.4,494.4 434.2,498.5 440.8,496.6 446.5,490 452.2,486.2 461.8,484.8 469.4,483.3 476.6,479.9 482.7,483.3 488.4,485.2 495.1,484.3 500.8,485.2 507.4,483.3 513.1,482.4 520,483.3 525.7,486.7 536.2,489 542.8,482.4 548.5,479.9 559,477.2 566.6,483.3 572.3,483.3 579,480.5 589.5,477.2 596.1,481 602.8,482.4 608.5,490 625.6,490.9 631.3,500.5 638,510 644.7,519.5 650.4,524.2 656.1,530.9 662.7,534.1 668.5,529 674.5,523.3 680.8,525.2 686.5,521.4 692.2,510.4 698,510.9 704.6,505.2 710.3,503.3 717,496.6 722.7,493.8 728.4,492.5 734.7,505.2 740.8,505.2 746.5,498.2 752.6,501.4 764.6,500.5 770.3,512.3 776,506.2 780,504.6 782.3,503.3 788.6,513.8 794.3,530 800,531.3 806.6,525.2 813.3,521.8 819,513.4 824.7,516.6 830.4,517.2 836.1,518 842.4,525.6 848.5,522.3 854.6,513.8 859.9,503.3 866.6,496.6 872.3,495.1 878.4,486.2 884.3,488.7 890.4,481.8 896.5,479.1 901.8,487.1 908.5,490 914.8,489.4 920.5,483.3 926.6,490 932.3,498.5 938.4,502.4 944.1,501.4 950.3,505.2 956.6,509.4 962.3,504.6 968.4,508.1 974.1,498.5 980.8,499.5 986.5,488.5 995.1,488.5 1000.8,491.9 1006.5,499.5 1012.2,510.9 1016.6,527.1 1022.7,512.8 1028.4,495.7 1034.1,490 1040,487.1 1040.5,487.1 1046.7,501 1052.8,501.4 1058.9,504.3 1064.8,502.4 1070.9,505.2 1077,514.7 1083.3,510.9 1089,509.4 1095.7,510 1100.8,511.9 1106.7,530 1112.8,534.7 1118.9,540.4 1125.2,540.4 1130.9,539.5 1134.3,538.1 1137.5,539.5 1142.7,543.3 1149,530 1154.7,527.1 1160.4,525.6 1166.5,518.5 1172.7,527.1 1178.5,530.9 1184.5,539.5 1190.8,533.8 1196.5,521.4 1202.8,506.2 1208.9,498.5 1214.2,488.1 1220.3,484.3 1226,480.5 1232.7,478.2 1238.4,481.4 1245.1,482.4 1250.8,484.3 1256.5,487.5 1259.9,488.1"/>
<g stroke="#000" stroke-width="1" fill="none"><line x1="1260.5" y1="24" x2="1260.5" y2="591"/><line x1="0" y1="559.5" x2="1323" y2="559.5"/><line x1="0" y1="343.5" x2="1260" y2="343.5"/><line x1="1261" y1="42.5" x2="1266" y2="42.5"/><line x1="1261" y1="80.5" x2="1266" y2="80.5"/><line x1="1261" y1="119.5" x2="1266" y2="119.5"/><line x1="1261" y1="158.5" x2="1266" y2="158.5"/><line x1="1261" y1="197.5" x2="1266" y2="197.5"/><line x1="1261" y1="236.5" x2="1266" y2="236.5"/><line x1="1261" y1="277.5" x2="1266" y2="277.5"/><line x1="1261" y1="314.5" x2="1266" y2="314.5"/><line x1="1261" y1="376.5" x2="1266" y2="376.5"/><line x1="1261" y1="413.5" x2="1266" y2="413.5"/><line x1="1261" y1="477.5" x2="1266" y2="477.5"/><line x1="1261" y1="515.5" x2="1266" y2="515.5"/><line x1="20.5" y1="560" x2="20.5" y2="564"/><line x1="68.5" y1="560" x2="68.5" y2="564"/><line x1="164.5" y1="560" x2="164.5" y2="564"/><line x1="260.5" y1="560" x2="260.5" y2="564"/><line x1="356.5" y1="560" x2="356.5" y2="564"/><line x1="452.5" y1="560" x2="452.5" y2="564"/><line x1="560.5" y1="560" x2="560.5" y2="564"/><line x1="656.5" y1="560" x2="656.5" y2="564"/><line x1="752.5" y1="560" x2="752.5" y2="564"/><line x1="848.5" y1="560" x2="848.5" y2="564"/><line x1="944.5" y1="560" x2="944.5" y2="564"/><line x1="1040.5" y1="560" x2="1040.5" y2="564"/><line x1="1136.5" y1="560" x2="1136.5" y2="564"/><line x1="1232.5" y1="560" x2="1232.5" y2="564"/></g>
<g class="t"><text x="1268" y="48">11,975</text><text x="1268" y="86">11,920</text><text x="1268" y="125">11,865</text><text x="1268" y="164">11,810</text><text x="1268" y="203">11,755</text><text x="1268" y="242">11,700</text><text x="1268" y="283">125.00</text><text x="1268" y="320">55.00</text><text x="1268" y="382">23.00</text><text x="1268" y="419">7.50</text><text x="1268" y="483">100.00</text><text x="1268" y="521">45.00</text></g>
<defs><clipPath id="cx"><rect x="0" y="560" width="1260" height="30"/></clipPath></defs>
<g class="t" clip-path="url(#cx)"><text x="20" y="579">02:40</text><text x="68" y="579">09:20</text><text x="164" y="579">10:40</text><text x="260" y="579">12:00</text><text x="356" y="579">13:20</text><text x="452" y="579">14:40</text><text x="560" y="579">17:20</text><text x="656" y="579">18:40</text><text x="752" y="579">20:00</text><text x="848" y="579">21:20</text><text x="944" y="579">22:40</text><text x="1040" y="579">03/07</text><text x="1136" y="579">01:20</text><text x="1232" y="579">02:40</text></g>
</svg>

<div id="tb">
  <div style="position:absolute;left:0;top:1px;width:12px;height:19px;box-sizing:border-box;background:linear-gradient(#fdfdfd,#e9e9e9 45%,#cfcfcf);border-right:1px solid #000;border-bottom:1px solid #000;"><div style="position:absolute;left:-1px;top:7px;border-left:4.5px solid transparent;border-right:4.5px solid transparent;border-top:5px solid #000;"></div></div>
  <div class="cb" style="left:16px;width:79px;"><span><u>先物</u></span><i></i></div>
  <div class="cb" style="left:96px;width:116px;"><span style="letter-spacing:0.3px"><u>日経</u>225mini</span><i></i></div>
  <div class="cb" style="left:213px;width:87px;"><span>13/06</span><i></i></div>
  <div class="lb" style="left:306px;width:20px;">足</div>
  <div class="sp" style="left:327px;width:38px;background:#d8dadf;color:#888;"><b>1</b><i></i></div>
  <div class="bt" style="left:368px;width:18px;">日</div>
  <div class="bt" style="left:388px;width:18px;">週</div>
  <div class="bt" style="left:408px;width:18px;">月</div>
  <div class="bt on" style="left:427px;width:19px;">分</div>
  <div class="bt" style="left:448px;width:18px;">T</div>
  <div class="lb" style="left:476px;width:20px;">分</div>
  <div class="sp" style="left:497px;width:38px;"><b>5</b><i></i></div>
  <div class="lb" style="left:537px;width:29px;">本数</div>
  <div class="sp" style="left:567px;width:48px;"><b>500</b><i></i></div>
  <div class="bt" style="left:618px;width:33px;">適用</div>
  <div class="bt" style="left:673px;width:58px;">複数銘柄</div>
</div>

<div class="h" style="left:0;top:26px;">日経225mini 13/06( 5分, 2013/03/05 - 2013/03/07 )</div>
<div class="h" style="left:314px;top:26px;">一目均衡表( 9, 26, 52 )</div>
<div class="h" style="left:472px;top:26px;">移動平均( Close, 10 )</div>
<div class="h" style="left:618px;top:26px;">移動平均( Close, 40 )</div>
<div class="h" style="left:764px;top:26px;">移動平均( Close, 5 )</div>
<div class="h" style="left:904px;top:26px;">移動平均( Close, 75 )</div>
<div class="h" style="left:1050px;top:26px;">移動平均( Close, 25 )</div>
<div class="h" style="left:0;top:40px;">移動平均( Close, 75 )</div>
<div class="h" style="left:146px;top:40px;">移動平均( Close, 150 )</div>
<div class="h" style="left:298px;top:40px;">移動平均( Close, 20 )</div>
<div class="h" style="left:0;top:261px;">出来高</div>
<div class="h" style="left:0;top:361px;">MACD( 12, 26, 9 )</div>
<div class="h" style="left:0;top:461px;">スロー・ストキャスティクス( 14, 3, 80, 20 )</div>
<div class="h" style="left:1263px;top:342px;width:40px;height:15px;border:1px solid #000;box-sizing:border-box;line-height:13px;padding-left:1px;">× 100</div>

<div class="dd" style="top:26px;"></div>
<div class="dd" style="top:261px;"></div>
<div class="dd" style="top:361px;"></div>
<div class="dd" style="top:461px;"></div>

<svg width="1366" height="768" viewBox="0 0 1366 768" shape-rendering="crispEdges" style="position:absolute;left:0;top:0"><rect x="0" y="591" width="1323" height="13" fill="#f7f7f7"/><defs><pattern id="dot" width="2" height="2" patternUnits="userSpaceOnUse"><rect width="2" height="2" fill="#ffffff"/><rect width="1" height="1" fill="#ececec"/><rect x="1" y="1" width="1" height="1" fill="#ececec"/></pattern></defs><rect x="12" y="591" width="972" height="13" fill="url(#dot)"/><rect x="0" y="603" width="1120" height="1" fill="#e2e2e2"/><rect x="0" y="591" width="12" height="13" fill="#f0f0f0"/><rect x="11" y="591" width="1" height="13" fill="#808080"/><path d="M0 599 L4 595 L4 603 Z" fill="#000"/><rect x="425" y="591" width="409" height="13" fill="#f0f0f0"/><rect x="425" y="591" width="409" height="1" fill="#e2e2e2"/><rect x="833" y="591" width="1" height="13" fill="#707070"/><rect x="834" y="591" width="1" height="13" fill="#c0c0c0"/><rect x="984" y="591" width="15" height="13" fill="#f0f0f0"/><rect x="998" y="591" width="1" height="13" fill="#707070"/><path d="M990 593 L995 598 L990 603 Z" fill="#000"/><rect x="1000" y="591" width="120" height="13" fill="#ececec"/><rect x="1006" y="595" width="108" height="1" fill="#a0a0a0"/><rect x="1006" y="596" width="108" height="1" fill="#fff"/><rect x="1006" y="594" width="5" height="1" fill="#a0a0a0"/><rect x="1006" y="594" width="1" height="4" fill="#a0a0a0"/><rect x="1011" y="593" width="4" height="10" fill="#f4f4f4"/><rect x="1014" y="593" width="1" height="10" fill="#909090"/><rect x="1011" y="593" width="1" height="10" fill="#fff"/><rect x="1120" y="591" width="17" height="13" fill="#dedede"/><rect x="1120" y="591" width="1" height="13" fill="#fff"/><rect x="1120" y="591" width="17" height="1" fill="#c8c8c8"/><rect x="1136" y="591" width="1" height="13" fill="#909090"/><rect x="1137" y="591" width="17" height="13" fill="#dedede"/><rect x="1137" y="591" width="1" height="13" fill="#fff"/><rect x="1137" y="591" width="17" height="1" fill="#c8c8c8"/><rect x="1153" y="591" width="1" height="13" fill="#909090"/><rect x="1154" y="591" width="17" height="13" fill="#dedede"/><rect x="1154" y="591" width="1" height="13" fill="#fff"/><rect x="1154" y="591" width="17" height="1" fill="#c8c8c8"/><rect x="1170" y="591" width="1" height="13" fill="#909090"/><rect x="1171" y="591" width="17" height="13" fill="#dedede"/><rect x="1171" y="591" width="1" height="13" fill="#fff"/><rect x="1171" y="591" width="17" height="1" fill="#c8c8c8"/><rect x="1187" y="591" width="1" height="13" fill="#909090"/><rect x="1188" y="591" width="17" height="13" fill="#dedede"/><rect x="1188" y="591" width="1" height="13" fill="#fff"/><rect x="1188" y="591" width="17" height="1" fill="#c8c8c8"/><rect x="1204" y="591" width="1" height="13" fill="#909090"/><rect x="1205" y="591" width="17" height="13" fill="#dedede"/><rect x="1205" y="591" width="1" height="13" fill="#fff"/><rect x="1205" y="591" width="17" height="1" fill="#c8c8c8"/><rect x="1221" y="591" width="1" height="13" fill="#909090"/><rect x="1222" y="591" width="17" height="13" fill="#dedede"/><rect x="1222" y="591" width="1" height="13" fill="#fff"/><rect x="1222" y="591" width="17" height="1" fill="#c8c8c8"/><rect x="1238" y="591" width="1" height="13" fill="#909090"/><rect x="1239" y="591" width="17" height="13" fill="#dedede"/><rect x="1239" y="591" width="1" height="13" fill="#fff"/><rect x="1239" y="591" width="17" height="1" fill="#c8c8c8"/><rect x="1255" y="591" width="1" height="13" fill="#909090"/><rect x="1256" y="591" width="17" height="13" fill="#dedede"/><rect x="1256" y="591" width="1" height="13" fill="#fff"/><rect x="1256" y="591" width="17" height="1" fill="#c8c8c8"/><rect x="1272" y="591" width="1" height="13" fill="#909090"/><rect x="1273" y="591" width="17" height="13" fill="#dedede"/><rect x="1273" y="591" width="1" height="13" fill="#fff"/><rect x="1273" y="591" width="17" height="1" fill="#c8c8c8"/><rect x="1289" y="591" width="1" height="13" fill="#909090"/><rect x="1290" y="591" width="17" height="13" fill="#dedede"/><rect x="1290" y="591" width="1" height="13" fill="#fff"/><rect x="1290" y="591" width="17" height="1" fill="#c8c8c8"/><rect x="1306" y="591" width="1" height="13" fill="#909090"/><rect x="1307" y="591" width="17" height="13" fill="#dedede"/><rect x="1307" y="591" width="1" height="13" fill="#fff"/><rect x="1307" y="591" width="17" height="1" fill="#c8c8c8"/><rect x="1323" y="591" width="1" height="13" fill="#909090"/><path d="M1123 599 L1128 594.5 L1128 597 L1130 597 L1130 601 L1128 601 L1128 603.5 Z" fill="#00087c"/><rect x="1131" y="595" width="2" height="9" fill="#00087c"/><rect x="1140" y="598" width="10" height="2" fill="#000"/><rect x="1144" y="594" width="2" height="10" fill="#000"/><rect x="1158" y="599" width="9" height="2" fill="#000"/><rect x="1179" y="594" width="2" height="10" fill="#00087c"/><path d="M1175 599 L1178 596 L1178 602 Z" fill="#00087c"/><path d="M1185 599 L1182 596 L1182 602 Z" fill="#00087c"/><rect x="1194" y="597" width="5" height="5" fill="#00087c"/><path d="M1212 594.5 L1217 599 L1212 603.5 Z" fill="#00087c"/><circle cx="1281" cy="599" r="4.6" fill="none" stroke="#000" stroke-width="1.1" shape-rendering="geometricPrecision"/><rect x="1278" y="598" width="6" height="2" fill="#000"/><rect x="1280" y="596" width="2" height="6" fill="#000"/><path d="M1294 595 L1302 603 M1302 595 L1294 603" stroke="#000" stroke-width="2" fill="none" shape-rendering="geometricPrecision"/><rect x="1310" y="595" width="2" height="9" fill="#00087c"/><path d="M1312 597 L1315 597 L1315 594.5 L1320 599 L1315 603.5 L1315 601 L1312 601 Z" fill="#00087c"/><g font-family="Liberation Sans,sans-serif" font-weight="bold" font-size="15" fill="#000" text-anchor="middle" shape-rendering="geometricPrecision"><text transform="translate(1231,605) scale(0.7,1)">D</text><text transform="translate(1245,605) scale(0.7,1)">I</text><text transform="translate(1265,605) scale(0.7,1)">R</text></g><rect x="1323" y="590" width="3" height="20" fill="#fff"/><rect x="0" y="604" width="1323" height="1" fill="#fff"/><rect x="0" y="605" width="1323" height="1" fill="#000"/><rect x="0" y="606" width="1323" height="1" fill="#a07c94"/><rect x="0" y="605" width="12" height="4" fill="#000"/><rect x="13" y="606" width="53" height="3" fill="#1a1a1a"/><rect x="101" y="606" width="1" height="3" fill="#000"/><rect x="136" y="606" width="1" height="3" fill="#000"/><rect x="171" y="606" width="1" height="3" fill="#000"/><rect x="206" y="606" width="1" height="3" fill="#000"/><rect x="241" y="606" width="4" height="2" fill="#000"/><rect x="537" y="606" width="19" height="2" fill="#000"/></svg>
</body>
</html>
